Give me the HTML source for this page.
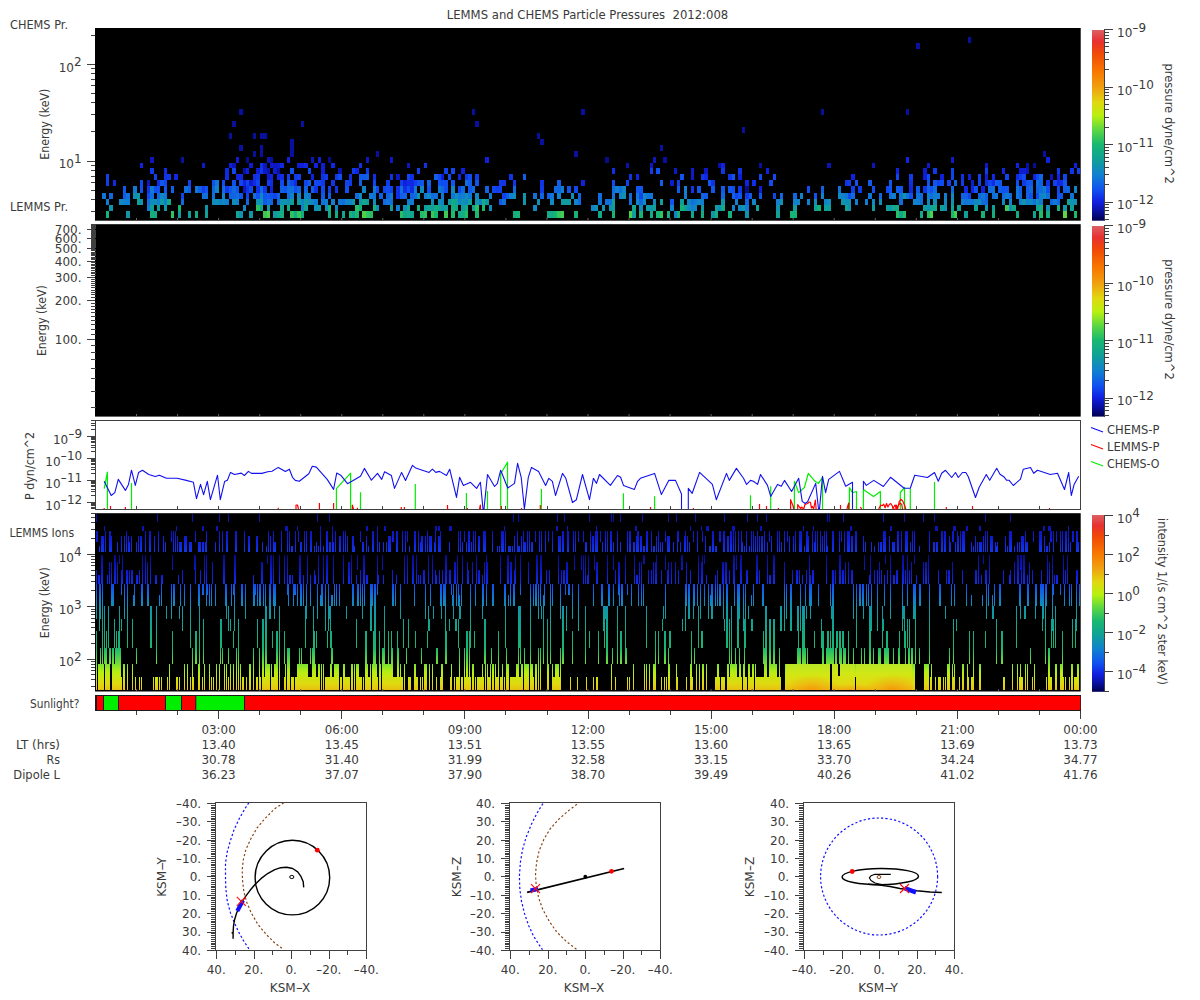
<!DOCTYPE html>
<html><head><meta charset="utf-8"><title>LEMMS and CHEMS Particle Pressures 2012:008</title>
<style>html,body{margin:0;padding:0;background:#fff}svg{display:block}text{font-family:'DejaVu Sans','Liberation Sans',sans-serif;fill:#3a3a3a}</style></head><body>
<svg width="1200" height="1000" viewBox="0 0 1200 1000">
<defs><linearGradient id="cb" x1="0" y1="1" x2="0" y2="0">
<stop offset="0.0" stop-color="#000050"/>
<stop offset="0.05" stop-color="#0810a0"/>
<stop offset="0.1" stop-color="#1020e0"/>
<stop offset="0.16" stop-color="#1050f0"/>
<stop offset="0.24" stop-color="#1080d0"/>
<stop offset="0.32" stop-color="#10a098"/>
<stop offset="0.4" stop-color="#18b870"/>
<stop offset="0.48" stop-color="#60d840"/>
<stop offset="0.55" stop-color="#b8f010"/>
<stop offset="0.62" stop-color="#e0d810"/>
<stop offset="0.7" stop-color="#f0a010"/>
<stop offset="0.78" stop-color="#f87800"/>
<stop offset="0.88" stop-color="#f04808"/>
<stop offset="0.94" stop-color="#e83030"/>
<stop offset="1.0" stop-color="#dc6064"/>
</linearGradient></defs>
<rect width="1200" height="1000" fill="#fff"/>
<text x="587.5" y="19" text-anchor="middle" font-size="12" textLength="281.5" lengthAdjust="spacingAndGlyphs" xml:space="preserve">LEMMS and CHEMS Particle Pressures  2012:008</text>
<rect x="95" y="28" width="985.7" height="192.7" fill="#000"/>
<text x="10" y="28.7" text-anchor="start" font-size="12" textLength="58" lengthAdjust="spacingAndGlyphs">CHEMS Pr.</text>
<text x="10" y="210.7" text-anchor="start" font-size="12" textLength="58" lengthAdjust="spacingAndGlyphs">LEMMS Pr.</text>
<text x="49" y="124.2" text-anchor="middle" font-size="12" transform="rotate(-90 49 124.2)" textLength="71" lengthAdjust="spacingAndGlyphs">Energy (keV)</text>
<path d="M87 64.3H95M87 161.0H95M91 35.2H95M91 68.7H95M91 73.7H95M91 79.3H95M91 85.8H95M91 93.4H95M91 102.8H95M91 114.9H95M91 131.9H95M91 165.4H95M91 170.4H95M91 176.0H95M91 182.5H95M91 190.1H95M91 199.5H95M91 211.6H95" stroke="#404040" stroke-width="1" fill="none" shape-rendering="crispEdges"/>
<text x="81.6" y="71.7" text-anchor="end" font-size="12">10<tspan dy="-5.5">2</tspan></text>
<text x="81.6" y="168.4" text-anchor="end" font-size="12">10<tspan dy="-5.5">1</tspan></text>
<path d="M102 193h4v6h-4zM386 199h4v6h-4zM899 193h4v6h-4z" fill="#1074d8" shape-rendering="crispEdges"/>
<path d="M106 211h3v7h-3zM328 205h3v6h-3zM516 211h4v7h-4zM554 211h3v7h-3zM612 211h3v7h-3zM790 211h3v7h-3z" fill="#17b477" shape-rendering="crispEdges"/>
<path d="M106 199h3v6h-3zM489 193h3v6h-3zM694 199h3v6h-3z" fill="#107bd4" shape-rendering="crispEdges"/>
<path d="M106 180h3v6h-3zM267 180h3v6h-3zM400 180h3v6h-3zM475 174h4v6h-4zM677 180h3v6h-3zM848 180h3v6h-3z" fill="#103dea" shape-rendering="crispEdges"/>
<path d="M106 174h3v6h-3zM246 180h3v6h-3zM297 174h4v6h-4zM390 186h3v7h-3zM444 168h4v6h-4zM502 193h4v6h-4zM626 180h3v6h-3zM851 186h4v7h-4zM988 180h4v6h-4zM1053 180h4v6h-4z" fill="#1041eb" shape-rendering="crispEdges"/>
<path d="M109 205h4v6h-4zM284 199h3v6h-3zM523 193h3v6h-3zM602 205h3v6h-3zM609 205h3v6h-3zM848 205h3v6h-3zM927 205h3v6h-3z" fill="#1094ad" shape-rendering="crispEdges"/>
<path d="M109 193h4v6h-4zM181 199h3v6h-3zM222 186h3v7h-3zM287 193h3v6h-3zM1009 193h3v6h-3z" fill="#1069df" shape-rendering="crispEdges"/>
<path d="M113 180h3v6h-3z" fill="#102ae3" shape-rendering="crispEdges"/>
<path d="M119 199h4v6h-4zM738 205h4v6h-4zM1043 193h3v6h-3z" fill="#1088c2" shape-rendering="crispEdges"/>
<path d="M123 199h3v6h-3zM684 186h3v7h-3zM776 199h4v6h-4zM793 199h4v6h-4z" fill="#1080cf" shape-rendering="crispEdges"/>
<path d="M123 193h3v6h-3zM468 180h4v6h-4zM704 193h4v6h-4zM868 180h4v6h-4zM998 186h4v7h-4z" fill="#105ce8" shape-rendering="crispEdges"/>
<path d="M123 186h3v7h-3zM160 180h4v6h-4zM267 193h3v6h-3zM697 186h4v7h-4zM749 193h3v6h-3zM1063 180h4v6h-4z" fill="#1059ea" shape-rendering="crispEdges"/>
<path d="M126 211h4v7h-4zM841 199h4v6h-4z" fill="#1097a7" shape-rendering="crispEdges"/>
<path d="M126 199h4v6h-4zM225 199h4v6h-4zM461 193h4v6h-4zM927 193h3v6h-3z" fill="#107cd3" shape-rendering="crispEdges"/>
<path d="M126 193h4v6h-4zM236 193h3v6h-3zM373 193h3v6h-3zM400 186h3v7h-3zM502 199h4v6h-4zM533 193h4v6h-4zM598 199h4v6h-4zM1070 193h4v6h-4z" fill="#1072d9" shape-rendering="crispEdges"/>
<path d="M133 193h4v6h-4zM827 199h4v6h-4zM978 199h3v6h-3z" fill="#108db9" shape-rendering="crispEdges"/>
<path d="M133 186h4v7h-4zM147 205h3v6h-3zM1016 193h3v6h-3zM1053 199h4v6h-4z" fill="#1078d5" shape-rendering="crispEdges"/>
<path d="M137 199h3v6h-3zM431 205h3v6h-3zM468 199h4v6h-4z" fill="#109f99" shape-rendering="crispEdges"/>
<path d="M137 193h3v6h-3zM715 205h3v6h-3z" fill="#109ba0" shape-rendering="crispEdges"/>
<path d="M140 199h3v6h-3zM461 199h4v6h-4zM595 205h3v6h-3z" fill="#1093af" shape-rendering="crispEdges"/>
<path d="M140 186h3v7h-3zM212 180h3v6h-3zM256 193h4v6h-4zM930 186h3v7h-3z" fill="#1051ef" shape-rendering="crispEdges"/>
<path d="M140 180h3v6h-3zM574 186h4v7h-4zM1036 193h3v6h-3z" fill="#1049ee" shape-rendering="crispEdges"/>
<path d="M140 163h3v5h-3zM243 180h3v6h-3zM277 174h3v6h-3zM314 163h4v5h-4zM636 174h3v6h-3zM896 168h3v6h-3zM1046 157h4v6h-4zM1057 174h3v6h-3z" fill="#1021e0" shape-rendering="crispEdges"/>
<path d="M147 199h3v6h-3zM383 199h3v6h-3zM619 186h3v7h-3zM951 186h3v7h-3z" fill="#106cde" shape-rendering="crispEdges"/>
<path d="M147 193h3v6h-3zM612 180h3v6h-3z" fill="#104bee" shape-rendering="crispEdges"/>
<path d="M147 186h3v7h-3zM424 163h3v5h-3z" fill="#1031e6" shape-rendering="crispEdges"/>
<path d="M147 180h3v6h-3zM366 157h3v6h-3zM407 163h3v5h-3z" fill="#0c17bd" shape-rendering="crispEdges"/>
<path d="M150 211h4v7h-4zM359 205h3v6h-3zM677 211h3v7h-3z" fill="#15b07e" shape-rendering="crispEdges"/>
<path d="M150 205h4v6h-4zM684 205h3v6h-3zM1070 205h4v6h-4z" fill="#10a196" shape-rendering="crispEdges"/>
<path d="M150 199h4v6h-4zM232 199h4v6h-4zM373 199h3v6h-3zM639 205h4v6h-4z" fill="#108cbb" shape-rendering="crispEdges"/>
<path d="M150 193h4v6h-4zM287 186h3v7h-3zM598 193h4v6h-4zM933 186h4v7h-4zM992 193h3v6h-3z" fill="#106ddd" shape-rendering="crispEdges"/>
<path d="M150 186h4v7h-4zM468 193h4v6h-4z" fill="#1079d4" shape-rendering="crispEdges"/>
<path d="M150 168h4v6h-4zM349 180h3v6h-3zM352 168h3v6h-3zM366 168h3v6h-3zM933 168h4v6h-4zM1022 180h4v6h-4z" fill="#103ae9" shape-rendering="crispEdges"/>
<path d="M150 157h4v6h-4zM243 186h3v7h-3zM1026 168h3v6h-3z" fill="#0b17bb" shape-rendering="crispEdges"/>
<path d="M154 211h3v7h-3zM195 211h3v7h-3zM455 205h3v6h-3zM721 205h4v6h-4zM920 211h3v7h-3z" fill="#13aa87" shape-rendering="crispEdges"/>
<path d="M154 199h3v6h-3zM325 205h3v6h-3zM376 205h3v6h-3zM403 205h4v6h-4zM718 205h3v6h-3z" fill="#108fb6" shape-rendering="crispEdges"/>
<path d="M154 186h3v7h-3zM294 186h3v7h-3zM444 186h4v7h-4zM468 174h4v6h-4zM732 186h3v7h-3zM807 186h3v7h-3z" fill="#104eef" shape-rendering="crispEdges"/>
<path d="M154 174h3v6h-3zM188 180h3v6h-3zM246 193h3v6h-3zM951 168h3v6h-3z" fill="#1042eb" shape-rendering="crispEdges"/>
<path d="M157 205h3v6h-3zM366 199h3v6h-3zM680 199h4v6h-4z" fill="#109e9c" shape-rendering="crispEdges"/>
<path d="M157 199h3v6h-3zM236 199h3v6h-3zM331 199h4v6h-4zM735 199h3v6h-3zM1019 199h3v6h-3z" fill="#1080d0" shape-rendering="crispEdges"/>
<path d="M157 193h3v6h-3zM246 199h3v6h-3zM554 186h3v7h-3zM578 199h3v6h-3zM793 193h4v6h-4z" fill="#1068e0" shape-rendering="crispEdges"/>
<path d="M157 186h3v7h-3zM270 193h3v6h-3zM290 168h4v6h-4zM338 174h4v6h-4zM345 186h4v7h-4zM927 174h3v6h-3zM1016 180h3v6h-3zM1029 193h4v6h-4zM1057 193h3v6h-3z" fill="#104ff0" shape-rendering="crispEdges"/>
<path d="M157 180h3v6h-3zM992 180h3v6h-3z" fill="#102de4" shape-rendering="crispEdges"/>
<path d="M160 199h4v6h-4zM424 205h3v6h-3zM561 199h3v6h-3z" fill="#109ba1" shape-rendering="crispEdges"/>
<path d="M160 193h4v6h-4zM215 186h4v7h-4zM311 199h3v6h-3zM619 193h3v6h-3zM797 199h3v6h-3z" fill="#1086c6" shape-rendering="crispEdges"/>
<path d="M164 205h3v6h-3zM448 199h3v6h-3zM889 205h3v6h-3z" fill="#109aa3" shape-rendering="crispEdges"/>
<path d="M164 199h3v6h-3zM410 199h4v6h-4zM561 186h3v7h-3zM933 193h4v6h-4zM968 199h3v6h-3zM1043 186h3v7h-3z" fill="#107dd2" shape-rendering="crispEdges"/>
<path d="M164 193h3v6h-3zM369 193h4v6h-4zM636 193h3v6h-3z" fill="#1078d6" shape-rendering="crispEdges"/>
<path d="M164 186h3v7h-3zM451 180h4v6h-4zM639 186h4v7h-4zM738 193h4v6h-4zM889 180h3v6h-3zM1029 180h4v6h-4z" fill="#1057eb" shape-rendering="crispEdges"/>
<path d="M164 180h3v6h-3zM438 174h3v6h-3zM451 168h4v6h-4zM773 193h3v6h-3zM1036 174h3v6h-3zM1057 186h3v7h-3z" fill="#1048ed" shape-rendering="crispEdges"/>
<path d="M164 174h3v6h-3zM314 186h4v7h-4zM321 174h4v6h-4zM390 174h3v6h-3zM721 168h4v6h-4zM845 180h3v6h-3z" fill="#1033e6" shape-rendering="crispEdges"/>
<path d="M164 168h3v6h-3zM253 180h3v6h-3zM270 180h3v6h-3zM407 180h3v6h-3zM410 186h4v7h-4zM985 180h3v6h-3zM1016 174h3v6h-3z" fill="#102be4" shape-rendering="crispEdges"/>
<path d="M167 199h4v6h-4zM328 211h3v7h-3zM407 211h3v7h-3zM458 211h3v7h-3zM547 211h3v7h-3z" fill="#14ab86" shape-rendering="crispEdges"/>
<path d="M167 174h4v6h-4zM225 186h4v7h-4zM260 168h3v6h-3zM499 180h3v6h-3zM701 174h3v6h-3z" fill="#1037e8" shape-rendering="crispEdges"/>
<path d="M171 211h3v7h-3z" fill="#2fc261" shape-rendering="crispEdges"/>
<path d="M171 186h3v7h-3zM927 186h3v7h-3zM1067 186h3v7h-3z" fill="#1063e3" shape-rendering="crispEdges"/>
<path d="M174 174h4v6h-4zM280 163h4v5h-4zM964 186h4v7h-4z" fill="#1028e3" shape-rendering="crispEdges"/>
<path d="M178 211h3v7h-3zM564 199h3v6h-3zM612 205h3v6h-3zM814 205h3v6h-3zM923 205h4v6h-4z" fill="#109d9d" shape-rendering="crispEdges"/>
<path d="M178 205h3v6h-3zM434 211h4v7h-4z" fill="#18b771" shape-rendering="crispEdges"/>
<path d="M181 193h3v6h-3zM239 180h4v6h-4zM407 174h3v6h-3zM492 186h4v7h-4zM1005 174h4v6h-4z" fill="#1046ed" shape-rendering="crispEdges"/>
<path d="M181 157h3v6h-3zM243 168h3v6h-3zM1026 163h3v5h-3z" fill="#0811a3" shape-rendering="crispEdges"/>
<path d="M184 186h4v7h-4z" fill="#106fdc" shape-rendering="crispEdges"/>
<path d="M188 211h3v7h-3zM290 199h4v6h-4zM872 205h3v6h-3zM940 205h4v6h-4z" fill="#109e9b" shape-rendering="crispEdges"/>
<path d="M188 186h3v7h-3zM677 186h3v7h-3zM721 186h4v7h-4z" fill="#105be9" shape-rendering="crispEdges"/>
<path d="M195 186h3v7h-3zM215 180h4v6h-4zM451 193h4v6h-4zM845 193h3v6h-3zM964 199h4v6h-4zM971 199h3v6h-3z" fill="#1077d6" shape-rendering="crispEdges"/>
<path d="M198 186h4v7h-4z" fill="#105de8" shape-rendering="crispEdges"/>
<path d="M202 193h3v6h-3zM434 193h4v6h-4z" fill="#1070da" shape-rendering="crispEdges"/>
<path d="M202 186h3v7h-3zM328 186h3v7h-3zM496 186h3v7h-3z" fill="#103fea" shape-rendering="crispEdges"/>
<path d="M202 163h3v5h-3zM270 163h3v5h-3zM691 174h3v6h-3z" fill="#0d1ac9" shape-rendering="crispEdges"/>
<path d="M205 211h3v7h-3zM845 205h3v6h-3zM957 205h4v6h-4zM992 205h3v6h-3z" fill="#10a197" shape-rendering="crispEdges"/>
<path d="M205 205h3v6h-3zM249 211h4v7h-4zM523 199h3v6h-3zM711 211h4v7h-4z" fill="#1096a9" shape-rendering="crispEdges"/>
<path d="M205 193h3v6h-3zM609 199h3v6h-3zM612 193h3v6h-3zM838 186h3v7h-3zM1036 180h3v6h-3z" fill="#1071da" shape-rendering="crispEdges"/>
<path d="M205 186h3v7h-3zM239 193h4v6h-4zM263 193h4v6h-4zM680 174h4v6h-4zM732 174h3v6h-3zM855 180h3v6h-3zM889 186h3v7h-3zM974 186h4v7h-4zM1026 180h3v6h-3z" fill="#1053ee" shape-rendering="crispEdges"/>
<path d="M212 199h3v6h-3zM550 199h4v6h-4zM872 199h3v6h-3z" fill="#108abf" shape-rendering="crispEdges"/>
<path d="M212 193h3v6h-3zM253 193h3v6h-3zM465 180h3v6h-3zM605 199h4v6h-4zM691 199h3v6h-3zM889 193h3v6h-3z" fill="#106fdb" shape-rendering="crispEdges"/>
<path d="M212 186h3v7h-3zM557 186h4v7h-4zM721 193h4v6h-4zM780 193h3v6h-3zM978 193h3v6h-3z" fill="#1066e1" shape-rendering="crispEdges"/>
<path d="M215 199h4v6h-4zM256 199h4v6h-4zM308 199h3v6h-3zM314 205h4v6h-4zM1036 199h3v6h-3zM1046 205h4v6h-4z" fill="#1090b4" shape-rendering="crispEdges"/>
<path d="M219 199h3v6h-3zM396 205h4v6h-4zM865 199h3v6h-3zM892 193h4v6h-4zM916 199h4v6h-4zM1026 199h3v6h-3z" fill="#107fd1" shape-rendering="crispEdges"/>
<path d="M222 199h3v6h-3zM451 186h4v7h-4zM489 205h3v6h-3zM643 199h3v6h-3zM653 199h3v6h-3zM944 199h3v6h-3zM951 193h3v6h-3z" fill="#108abe" shape-rendering="crispEdges"/>
<path d="M222 193h3v6h-3zM479 199h3v6h-3zM732 205h3v6h-3zM961 199h3v6h-3z" fill="#1082cd" shape-rendering="crispEdges"/>
<path d="M222 180h3v6h-3zM280 180h4v6h-4zM321 186h4v7h-4zM376 186h3v7h-3zM386 186h4v7h-4zM441 180h3v6h-3zM444 180h4v6h-4zM769 180h4v6h-4zM1022 174h4v6h-4z" fill="#104cef" shape-rendering="crispEdges"/>
<path d="M225 174h4v6h-4zM294 180h3v6h-3zM1060 180h3v6h-3z" fill="#102ce4" shape-rendering="crispEdges"/>
<path d="M225 168h4v6h-4zM304 163h4v5h-4zM704 174h4v6h-4zM992 174h3v6h-3zM1057 180h3v6h-3z" fill="#1029e3" shape-rendering="crispEdges"/>
<path d="M229 193h3v6h-3zM297 186h4v7h-4zM379 193h4v6h-4zM386 193h4v6h-4zM427 180h4v6h-4zM732 193h3v6h-3zM745 199h4v6h-4zM985 193h3v6h-3zM1036 186h3v7h-3z" fill="#1062e4" shape-rendering="crispEdges"/>
<path d="M229 186h3v7h-3zM420 180h4v6h-4zM567 186h4v7h-4zM1005 186h4v7h-4z" fill="#1056ec" shape-rendering="crispEdges"/>
<path d="M229 163h3v5h-3zM301 163h3v5h-3z" fill="#101fdd" shape-rendering="crispEdges"/>
<path d="M232 193h4v6h-4zM270 199h3v6h-3zM403 193h4v6h-4zM540 193h4v6h-4zM821 186h3v7h-3z" fill="#1064e3" shape-rendering="crispEdges"/>
<path d="M232 186h4v7h-4zM260 186h3v7h-3zM431 193h3v6h-3zM513 186h3v7h-3zM1002 193h3v6h-3z" fill="#106adf" shape-rendering="crispEdges"/>
<path d="M232 180h4v6h-4zM427 186h4v7h-4zM1002 186h3v7h-3zM1046 186h4v7h-4z" fill="#1050f0" shape-rendering="crispEdges"/>
<path d="M232 168h4v6h-4zM256 180h4v6h-4zM458 186h3v7h-3zM639 193h4v6h-4zM978 180h3v6h-3zM1063 174h4v6h-4z" fill="#1045ec" shape-rendering="crispEdges"/>
<path d="M232 163h4v5h-4z" fill="#0b15b6" shape-rendering="crispEdges"/>
<path d="M236 211h3v7h-3zM280 205h4v6h-4zM427 205h4v6h-4zM691 211h3v7h-3z" fill="#12a590" shape-rendering="crispEdges"/>
<path d="M236 186h3v7h-3zM475 180h4v6h-4zM670 199h4v6h-4zM759 193h3v6h-3zM909 193h4v6h-4zM933 180h4v6h-4z" fill="#1054ed" shape-rendering="crispEdges"/>
<path d="M236 174h3v6h-3zM270 174h3v6h-3zM458 174h3v6h-3zM745 180h4v6h-4z" fill="#1023e1" shape-rendering="crispEdges"/>
<path d="M236 157h3v6h-3z" fill="#0e1bcc" shape-rendering="crispEdges"/>
<path d="M239 211h4v7h-4zM537 199h3v6h-3zM622 193h4v6h-4zM780 199h3v6h-3zM848 199h3v6h-3z" fill="#1091b2" shape-rendering="crispEdges"/>
<path d="M239 174h4v6h-4zM331 163h4v5h-4zM410 180h4v6h-4zM909 186h4v7h-4z" fill="#1027e2" shape-rendering="crispEdges"/>
<path d="M243 205h3v6h-3zM694 205h3v6h-3z" fill="#1086c5" shape-rendering="crispEdges"/>
<path d="M246 186h3v7h-3zM373 174h3v6h-3zM711 180h4v6h-4zM961 174h3v6h-3z" fill="#1030e5" shape-rendering="crispEdges"/>
<path d="M246 168h3v6h-3z" fill="#0f1ed9" shape-rendering="crispEdges"/>
<path d="M246 157h3v6h-3z" fill="#060c8c" shape-rendering="crispEdges"/>
<path d="M249 186h4v7h-4zM314 180h4v6h-4zM759 174h3v6h-3zM773 174h3v6h-3zM848 193h3v6h-3zM886 186h3v7h-3z" fill="#104aee" shape-rendering="crispEdges"/>
<path d="M249 180h4v6h-4zM670 180h4v6h-4z" fill="#0d1bcb" shape-rendering="crispEdges"/>
<path d="M249 163h4v5h-4zM923 168h4v6h-4z" fill="#0e1ccf" shape-rendering="crispEdges"/>
<path d="M253 174h3v6h-3zM256 186h4v7h-4zM349 174h3v6h-3zM396 193h4v6h-4zM396 186h4v7h-4zM738 168h4v6h-4zM909 180h4v6h-4z" fill="#102fe5" shape-rendering="crispEdges"/>
<path d="M256 205h4v6h-4z" fill="#29c065" shape-rendering="crispEdges"/>
<path d="M256 174h4v6h-4zM331 180h4v6h-4zM513 180h3v6h-3zM923 186h4v7h-4z" fill="#1036e7" shape-rendering="crispEdges"/>
<path d="M256 168h4v6h-4z" fill="#0e1cd2" shape-rendering="crispEdges"/>
<path d="M260 205h3v6h-3zM352 211h3v7h-3z" fill="#12a68d" shape-rendering="crispEdges"/>
<path d="M260 199h3v6h-3z" fill="#1095ac" shape-rendering="crispEdges"/>
<path d="M260 193h3v6h-3zM1009 199h3v6h-3z" fill="#1085c8" shape-rendering="crispEdges"/>
<path d="M260 163h3v5h-3zM359 163h3v5h-3zM1046 180h4v6h-4z" fill="#1032e6" shape-rendering="crispEdges"/>
<path d="M263 211h4v7h-4z" fill="#39c75a" shape-rendering="crispEdges"/>
<path d="M263 199h4v6h-4zM359 174h3v6h-3zM362 174h4v6h-4zM499 199h3v6h-3zM708 180h3v6h-3zM916 186h4v7h-4z" fill="#105ae9" shape-rendering="crispEdges"/>
<path d="M263 186h4v7h-4zM502 180h4v6h-4zM540 180h4v6h-4zM629 174h3v6h-3zM728 174h4v6h-4z" fill="#1035e7" shape-rendering="crispEdges"/>
<path d="M263 168h4v6h-4zM390 157h3v6h-3zM985 163h3v5h-3z" fill="#0d19c5" shape-rendering="crispEdges"/>
<path d="M263 163h4v5h-4zM273 163h4v5h-4z" fill="#0c18be" shape-rendering="crispEdges"/>
<path d="M267 211h3v7h-3z" fill="#55d347" shape-rendering="crispEdges"/>
<path d="M267 205h3v6h-3zM475 199h4v6h-4zM485 199h4v6h-4z" fill="#1097a8" shape-rendering="crispEdges"/>
<path d="M267 199h3v6h-3z" fill="#106ddc" shape-rendering="crispEdges"/>
<path d="M267 174h3v6h-3z" fill="#0e1cd1" shape-rendering="crispEdges"/>
<path d="M267 168h3v6h-3z" fill="#0a13ac" shape-rendering="crispEdges"/>
<path d="M267 157h3v6h-3zM827 163h4v5h-4z" fill="#0a14b0" shape-rendering="crispEdges"/>
<path d="M270 186h3v7h-3zM766 168h3v6h-3zM1074 163h3v5h-3z" fill="#0f1fdb" shape-rendering="crispEdges"/>
<path d="M270 157h3v6h-3z" fill="#070e98" shape-rendering="crispEdges"/>
<path d="M273 211h4v7h-4z" fill="#1098a7" shape-rendering="crispEdges"/>
<path d="M273 193h4v6h-4zM304 180h4v6h-4z" fill="#1044ec" shape-rendering="crispEdges"/>
<path d="M273 168h4v6h-4zM691 168h3v6h-3z" fill="#0e1cce" shape-rendering="crispEdges"/>
<path d="M277 211h3v7h-3zM403 211h4v7h-4z" fill="#12a68e" shape-rendering="crispEdges"/>
<path d="M277 199h3v6h-3zM342 199h3v6h-3zM920 199h3v6h-3zM930 193h3v6h-3zM992 186h3v7h-3z" fill="#106edc" shape-rendering="crispEdges"/>
<path d="M277 193h3v6h-3zM359 180h3v6h-3zM400 193h3v6h-3zM660 180h3v6h-3z" fill="#1061e5" shape-rendering="crispEdges"/>
<path d="M277 168h3v6h-3z" fill="#0811a2" shape-rendering="crispEdges"/>
<path d="M277 163h3v5h-3z" fill="#0d1ac8" shape-rendering="crispEdges"/>
<path d="M280 211h4v7h-4zM451 205h4v6h-4z" fill="#15af7f" shape-rendering="crispEdges"/>
<path d="M280 199h4v6h-4z" fill="#1093ae" shape-rendering="crispEdges"/>
<path d="M280 186h4v7h-4zM308 180h3v6h-3zM311 186h3v7h-3zM366 174h3v6h-3zM896 186h3v7h-3zM964 193h4v6h-4z" fill="#105fe6" shape-rendering="crispEdges"/>
<path d="M280 174h4v6h-4zM403 186h4v7h-4zM410 174h4v6h-4zM612 168h3v6h-3zM752 180h4v6h-4z" fill="#102ee5" shape-rendering="crispEdges"/>
<path d="M284 186h3v7h-3zM636 186h3v7h-3zM927 180h3v6h-3zM998 180h4v6h-4z" fill="#1055ed" shape-rendering="crispEdges"/>
<path d="M287 205h3v6h-3zM301 211h3v7h-3z" fill="#14ac84" shape-rendering="crispEdges"/>
<path d="M287 199h3v6h-3zM431 199h3v6h-3zM465 193h3v6h-3zM933 199h4v6h-4z" fill="#108eb7" shape-rendering="crispEdges"/>
<path d="M287 180h3v6h-3zM328 193h3v6h-3zM1039 180h4v6h-4z" fill="#1060e6" shape-rendering="crispEdges"/>
<path d="M287 174h3v6h-3zM414 180h3v6h-3zM499 186h3v7h-3zM1077 168h3v6h-3z" fill="#1040eb" shape-rendering="crispEdges"/>
<path d="M287 157h3v6h-3zM721 163h4v5h-4z" fill="#1020df" shape-rendering="crispEdges"/>
<path d="M290 211h4v7h-4z" fill="#2cc163" shape-rendering="crispEdges"/>
<path d="M290 193h4v6h-4zM345 199h4v6h-4zM362 186h4v7h-4zM458 199h3v6h-3zM591 205h4v6h-4zM674 211h3v7h-3zM1074 186h3v7h-3z" fill="#1084c9" shape-rendering="crispEdges"/>
<path d="M290 186h4v7h-4zM390 199h3v6h-3zM472 186h3v7h-3zM629 199h3v6h-3zM1046 193h4v6h-4z" fill="#1070db" shape-rendering="crispEdges"/>
<path d="M290 180h4v6h-4zM318 180h3v6h-3zM373 180h3v6h-3zM383 186h3v7h-3zM896 174h3v6h-3zM951 174h3v6h-3zM968 193h3v6h-3z" fill="#1047ed" shape-rendering="crispEdges"/>
<path d="M294 211h3v7h-3zM451 199h4v6h-4zM650 211h3v7h-3z" fill="#13aa88" shape-rendering="crispEdges"/>
<path d="M294 174h3v6h-3zM386 180h4v6h-4zM858 186h4v7h-4zM961 180h3v6h-3z" fill="#103be9" shape-rendering="crispEdges"/>
<path d="M297 211h4v7h-4z" fill="#35c55d" shape-rendering="crispEdges"/>
<path d="M297 199h4v6h-4z" fill="#109c9e" shape-rendering="crispEdges"/>
<path d="M297 193h4v6h-4zM533 205h4v6h-4zM927 199h3v6h-3z" fill="#1089c1" shape-rendering="crispEdges"/>
<path d="M297 163h4v5h-4zM971 180h3v6h-3zM1019 168h3v6h-3z" fill="#0e1dd2" shape-rendering="crispEdges"/>
<path d="M301 205h3v6h-3zM301 199h3v6h-3zM800 193h3v6h-3z" fill="#1084c8" shape-rendering="crispEdges"/>
<path d="M304 205h4v6h-4z" fill="#11a491" shape-rendering="crispEdges"/>
<path d="M304 199h4v6h-4z" fill="#1099a3" shape-rendering="crispEdges"/>
<path d="M304 193h4v6h-4z" fill="#1081cd" shape-rendering="crispEdges"/>
<path d="M304 186h4v7h-4zM701 193h3v6h-3zM879 193h3v6h-3zM985 199h3v6h-3zM1019 193h3v6h-3zM1050 199h3v6h-3z" fill="#1065e2" shape-rendering="crispEdges"/>
<path d="M308 193h3v6h-3zM407 199h3v6h-3zM424 193h3v6h-3zM1005 193h4v6h-4z" fill="#107bd3" shape-rendering="crispEdges"/>
<path d="M308 168h3v6h-3zM407 186h3v7h-3zM448 174h3v6h-3zM940 180h4v6h-4z" fill="#104def" shape-rendering="crispEdges"/>
<path d="M311 174h3v6h-3zM851 174h4v6h-4zM981 186h4v7h-4zM1016 163h3v5h-3zM1033 174h3v6h-3z" fill="#1022e1" shape-rendering="crispEdges"/>
<path d="M311 157h3v6h-3zM872 163h3v5h-3z" fill="#0b16ba" shape-rendering="crispEdges"/>
<path d="M314 199h4v6h-4zM390 193h3v6h-3zM414 186h3v7h-3zM745 205h4v6h-4z" fill="#107ad4" shape-rendering="crispEdges"/>
<path d="M318 205h3v6h-3zM646 205h4v6h-4z" fill="#1099a4" shape-rendering="crispEdges"/>
<path d="M318 157h3v6h-3zM321 168h4v6h-4zM738 174h4v6h-4z" fill="#0f1ed7" shape-rendering="crispEdges"/>
<path d="M321 199h4v6h-4zM906 193h3v6h-3zM916 193h4v6h-4zM1016 186h3v7h-3z" fill="#1073d9" shape-rendering="crispEdges"/>
<path d="M321 193h4v6h-4zM1026 186h3v7h-3z" fill="#105aea" shape-rendering="crispEdges"/>
<path d="M321 180h4v6h-4zM738 186h4v7h-4z" fill="#1038e8" shape-rendering="crispEdges"/>
<path d="M321 163h4v5h-4z" fill="#0f1dd4" shape-rendering="crispEdges"/>
<path d="M325 199h3v6h-3z" fill="#107fd0" shape-rendering="crispEdges"/>
<path d="M325 174h3v6h-3zM909 174h4v6h-4zM985 168h3v6h-3zM1019 174h3v6h-3z" fill="#103ce9" shape-rendering="crispEdges"/>
<path d="M328 157h3v6h-3zM605 157h4v6h-4z" fill="#060b88" shape-rendering="crispEdges"/>
<path d="M335 211h3v7h-3zM513 211h3v7h-3zM701 211h3v7h-3zM1016 211h3v7h-3z" fill="#14ad83" shape-rendering="crispEdges"/>
<path d="M335 205h3v6h-3zM420 186h4v7h-4zM475 193h4v6h-4zM838 193h3v6h-3zM974 199h4v6h-4z" fill="#1089c0" shape-rendering="crispEdges"/>
<path d="M335 186h3v7h-3zM509 174h4v6h-4zM691 186h3v7h-3zM1057 168h3v6h-3zM1070 168h4v6h-4z" fill="#1034e7" shape-rendering="crispEdges"/>
<path d="M335 174h3v6h-3zM465 174h3v6h-3zM540 186h4v7h-4zM745 193h4v6h-4z" fill="#1039e8" shape-rendering="crispEdges"/>
<path d="M338 199h4v6h-4zM550 193h4v6h-4zM1033 199h3v6h-3z" fill="#1075d7" shape-rendering="crispEdges"/>
<path d="M338 168h4v6h-4z" fill="#0a13ad" shape-rendering="crispEdges"/>
<path d="M342 211h3v7h-3z" fill="#12a78d" shape-rendering="crispEdges"/>
<path d="M345 180h4v6h-4zM735 193h3v6h-3zM937 180h3v6h-3zM947 180h4v6h-4zM978 174h3v6h-3z" fill="#1043ec" shape-rendering="crispEdges"/>
<path d="M349 211h3v7h-3z" fill="#16b27b" shape-rendering="crispEdges"/>
<path d="M349 199h3v6h-3zM643 193h3v6h-3z" fill="#1088c1" shape-rendering="crispEdges"/>
<path d="M352 199h3v6h-3zM417 193h3v6h-3zM441 205h3v6h-3zM650 205h3v6h-3zM742 205h3v6h-3zM985 205h3v6h-3zM1022 199h4v6h-4z" fill="#1095ab" shape-rendering="crispEdges"/>
<path d="M355 211h4v7h-4z" fill="#18b772" shape-rendering="crispEdges"/>
<path d="M355 205h4v6h-4zM896 211h3v7h-3z" fill="#28bf65" shape-rendering="crispEdges"/>
<path d="M355 193h4v6h-4zM414 193h3v6h-3zM629 193h3v6h-3zM851 193h4v6h-4zM899 199h4v6h-4zM981 199h4v6h-4z" fill="#106cdd" shape-rendering="crispEdges"/>
<path d="M355 168h4v6h-4zM971 186h3v7h-3z" fill="#1025e2" shape-rendering="crispEdges"/>
<path d="M359 199h3v6h-3zM721 199h4v6h-4zM903 193h3v6h-3z" fill="#1096aa" shape-rendering="crispEdges"/>
<path d="M359 193h3v6h-3zM845 199h3v6h-3z" fill="#108bbd" shape-rendering="crispEdges"/>
<path d="M362 211h4v7h-4z" fill="#50d14a" shape-rendering="crispEdges"/>
<path d="M362 199h4v6h-4zM632 205h4v6h-4zM933 205h4v6h-4z" fill="#13a88b" shape-rendering="crispEdges"/>
<path d="M366 211h3v7h-3z" fill="#32c45f" shape-rendering="crispEdges"/>
<path d="M369 211h4v7h-4z" fill="#25be67" shape-rendering="crispEdges"/>
<path d="M373 205h3v6h-3zM1039 205h4v6h-4z" fill="#15b07d" shape-rendering="crispEdges"/>
<path d="M373 186h3v7h-3zM458 193h3v6h-3zM646 193h4v6h-4zM868 193h4v6h-4z" fill="#1076d7" shape-rendering="crispEdges"/>
<path d="M390 205h3v6h-3zM567 199h4v6h-4z" fill="#109c9f" shape-rendering="crispEdges"/>
<path d="M396 174h4v6h-4z" fill="#0b17bc" shape-rendering="crispEdges"/>
<path d="M400 211h3v7h-3z" fill="#27bf66" shape-rendering="crispEdges"/>
<path d="M403 180h4v6h-4z" fill="#0f1fda" shape-rendering="crispEdges"/>
<path d="M407 205h3v6h-3zM410 211h4v7h-4zM951 205h3v6h-3z" fill="#11a394" shape-rendering="crispEdges"/>
<path d="M410 193h4v6h-4zM434 174h4v6h-4zM954 180h3v6h-3zM1063 186h4v7h-4z" fill="#1060e5" shape-rendering="crispEdges"/>
<path d="M417 205h3v6h-3zM680 205h4v6h-4zM793 211h4v7h-4z" fill="#16b378" shape-rendering="crispEdges"/>
<path d="M417 180h3v6h-3z" fill="#1051f0" shape-rendering="crispEdges"/>
<path d="M417 168h3v6h-3zM650 168h3v6h-3z" fill="#103eea" shape-rendering="crispEdges"/>
<path d="M420 211h4v7h-4zM903 211h3v7h-3zM927 211h3v7h-3z" fill="#23bd69" shape-rendering="crispEdges"/>
<path d="M424 211h3v7h-3z" fill="#2ec261" shape-rendering="crispEdges"/>
<path d="M427 193h4v6h-4zM697 199h4v6h-4z" fill="#1087c4" shape-rendering="crispEdges"/>
<path d="M431 211h3v7h-3z" fill="#3ac759" shape-rendering="crispEdges"/>
<path d="M434 205h4v6h-4z" fill="#14ad82" shape-rendering="crispEdges"/>
<path d="M438 205h3v6h-3zM455 199h3v6h-3zM472 205h3v6h-3zM756 205h3v6h-3zM930 205h3v6h-3z" fill="#11a393" shape-rendering="crispEdges"/>
<path d="M438 199h3v6h-3zM455 193h3v6h-3zM571 193h3v6h-3z" fill="#108fb5" shape-rendering="crispEdges"/>
<path d="M438 186h3v7h-3zM441 193h3v6h-3zM995 193h3v6h-3zM1039 199h4v6h-4z" fill="#1079d5" shape-rendering="crispEdges"/>
<path d="M438 180h3v6h-3zM656 168h4v6h-4zM814 193h3v6h-3z" fill="#1052ef" shape-rendering="crispEdges"/>
<path d="M441 199h3v6h-3zM574 199h4v6h-4z" fill="#1084ca" shape-rendering="crispEdges"/>
<path d="M441 186h3v7h-3zM461 186h4v7h-4zM612 186h3v7h-3zM920 193h3v6h-3zM988 186h4v7h-4zM1039 186h4v7h-4z" fill="#106bde" shape-rendering="crispEdges"/>
<path d="M441 174h3v6h-3z" fill="#0e1dd3" shape-rendering="crispEdges"/>
<path d="M444 211h4v7h-4z" fill="#40ca55" shape-rendering="crispEdges"/>
<path d="M444 205h4v6h-4zM824 205h3v6h-3zM964 211h4v7h-4z" fill="#10a097" shape-rendering="crispEdges"/>
<path d="M451 211h4v7h-4zM1039 211h4v7h-4z" fill="#21bc6a" shape-rendering="crispEdges"/>
<path d="M461 211h4v7h-4zM728 211h4v7h-4zM992 211h3v7h-3z" fill="#15ae80" shape-rendering="crispEdges"/>
<path d="M461 205h4v6h-4zM793 205h4v6h-4zM886 205h3v6h-3z" fill="#109f9a" shape-rendering="crispEdges"/>
<path d="M461 168h4v6h-4zM923 174h4v6h-4z" fill="#0f1eda" shape-rendering="crispEdges"/>
<path d="M465 211h3v7h-3z" fill="#23bd68" shape-rendering="crispEdges"/>
<path d="M465 205h3v6h-3zM550 211h4v7h-4z" fill="#14ab85" shape-rendering="crispEdges"/>
<path d="M465 199h3v6h-3zM1002 199h3v6h-3z" fill="#1088c3" shape-rendering="crispEdges"/>
<path d="M468 186h4v7h-4z" fill="#1055ec" shape-rendering="crispEdges"/>
<path d="M475 211h4v7h-4z" fill="#1ab96f" shape-rendering="crispEdges"/>
<path d="M475 205h4v6h-4z" fill="#2cc162" shape-rendering="crispEdges"/>
<path d="M482 205h3v6h-3z" fill="#1ab96e" shape-rendering="crispEdges"/>
<path d="M482 199h3v6h-3z" fill="#15ae81" shape-rendering="crispEdges"/>
<path d="M485 186h4v7h-4zM578 193h3v6h-3z" fill="#1063e4" shape-rendering="crispEdges"/>
<path d="M485 157h4v6h-4z" fill="#1020de" shape-rendering="crispEdges"/>
<path d="M506 193h3v6h-3z" fill="#1058ea" shape-rendering="crispEdges"/>
<path d="M509 193h4v6h-4zM615 186h4v7h-4zM807 199h3v6h-3zM1039 193h4v6h-4z" fill="#1081ce" shape-rendering="crispEdges"/>
<path d="M513 193h3v6h-3zM687 205h4v6h-4z" fill="#108cba" shape-rendering="crispEdges"/>
<path d="M523 174h3v6h-3zM557 180h4v6h-4z" fill="#105de7" shape-rendering="crispEdges"/>
<path d="M547 193h3v6h-3z" fill="#105ee7" shape-rendering="crispEdges"/>
<path d="M557 211h4v7h-4z" fill="#37c65b" shape-rendering="crispEdges"/>
<path d="M557 193h4v6h-4zM821 193h3v6h-3zM913 199h3v6h-3z" fill="#1083cb" shape-rendering="crispEdges"/>
<path d="M561 211h3v7h-3z" fill="#46cc51" shape-rendering="crispEdges"/>
<path d="M574 211h4v7h-4zM639 211h4v7h-4zM981 211h4v7h-4zM1057 205h3v6h-3z" fill="#16b27a" shape-rendering="crispEdges"/>
<path d="M581 180h4v6h-4z" fill="#1020e0" shape-rendering="crispEdges"/>
<path d="M598 211h4v7h-4z" fill="#13a988" shape-rendering="crispEdges"/>
<path d="M612 199h3v6h-3zM1033 211h3v7h-3zM1067 199h3v6h-3z" fill="#11a294" shape-rendering="crispEdges"/>
<path d="M622 186h4v7h-4zM636 199h3v6h-3zM687 199h4v6h-4z" fill="#1087c3" shape-rendering="crispEdges"/>
<path d="M626 163h3v5h-3z" fill="#0913ab" shape-rendering="crispEdges"/>
<path d="M629 211h3v7h-3zM954 211h3v7h-3z" fill="#49ce4f" shape-rendering="crispEdges"/>
<path d="M632 211h4v7h-4zM827 205h4v6h-4z" fill="#109d9e" shape-rendering="crispEdges"/>
<path d="M639 199h4v6h-4zM1057 199h3v6h-3z" fill="#1066e2" shape-rendering="crispEdges"/>
<path d="M650 193h3v6h-3z" fill="#1073d8" shape-rendering="crispEdges"/>
<path d="M650 163h3v5h-3z" fill="#0c18c2" shape-rendering="crispEdges"/>
<path d="M653 205h3v6h-3zM974 205h4v6h-4z" fill="#11a392" shape-rendering="crispEdges"/>
<path d="M653 157h3v6h-3z" fill="#0c17be" shape-rendering="crispEdges"/>
<path d="M656 211h4v7h-4z" fill="#17b674" shape-rendering="crispEdges"/>
<path d="M660 211h3v7h-3z" fill="#31c35f" shape-rendering="crispEdges"/>
<path d="M660 199h3v6h-3z" fill="#10a098" shape-rendering="crispEdges"/>
<path d="M663 157h4v6h-4zM759 163h3v5h-3zM916 43h4v6h-4zM968 37h3v6h-3zM821 109h3v6h-3zM906 109h3v6h-3zM742 127h3v6h-3zM660 145h3v6h-3zM1043 151h3v6h-3zM239 109h4v6h-4zM232 121h4v6h-4zM229 133h3v6h-3zM253 133h3v6h-3zM260 133h3v6h-3zM263 133h4v6h-4zM301 121h3v6h-3zM290 139h4v6h-4zM290 145h4v6h-4zM290 151h4v6h-4zM239 145h4v6h-4zM260 145h3v6h-3zM260 151h3v6h-3zM253 151h3v6h-3zM376 151h3v6h-3zM472 109h3v6h-3zM475 121h4v6h-4zM581 109h4v6h-4zM537 133h3v6h-3zM540 139h4v6h-4zM574 151h4v6h-4z" fill="#0810a0" shape-rendering="crispEdges"/>
<path d="M667 211h3v7h-3zM1046 211h4v7h-4z" fill="#15af80" shape-rendering="crispEdges"/>
<path d="M670 205h4v6h-4z" fill="#1083ca" shape-rendering="crispEdges"/>
<path d="M674 168h3v6h-3zM704 168h4v6h-4z" fill="#0c19c3" shape-rendering="crispEdges"/>
<path d="M684 193h3v6h-3zM701 199h3v6h-3zM855 199h3v6h-3zM944 193h3v6h-3z" fill="#107ed1" shape-rendering="crispEdges"/>
<path d="M691 205h3v6h-3zM824 199h3v6h-3z" fill="#1081cf" shape-rendering="crispEdges"/>
<path d="M701 205h3v6h-3z" fill="#1098a5" shape-rendering="crispEdges"/>
<path d="M711 186h4v7h-4z" fill="#1058eb" shape-rendering="crispEdges"/>
<path d="M715 211h3v7h-3zM817 205h4v6h-4z" fill="#16b17b" shape-rendering="crispEdges"/>
<path d="M718 163h3v5h-3z" fill="#0911a5" shape-rendering="crispEdges"/>
<path d="M728 186h4v7h-4zM899 186h4v7h-4zM1060 193h3v6h-3z" fill="#1057ec" shape-rendering="crispEdges"/>
<path d="M745 211h4v7h-4z" fill="#1092b0" shape-rendering="crispEdges"/>
<path d="M745 186h4v7h-4z" fill="#060c8d" shape-rendering="crispEdges"/>
<path d="M752 199h4v6h-4z" fill="#1085c7" shape-rendering="crispEdges"/>
<path d="M759 186h3v7h-3z" fill="#101fde" shape-rendering="crispEdges"/>
<path d="M776 211h4v7h-4zM1036 205h3v6h-3z" fill="#11a295" shape-rendering="crispEdges"/>
<path d="M776 205h4v6h-4zM944 205h3v6h-3zM1070 199h4v6h-4z" fill="#1092b1" shape-rendering="crispEdges"/>
<path d="M814 199h3v6h-3zM879 199h3v6h-3z" fill="#108db8" shape-rendering="crispEdges"/>
<path d="M841 193h4v6h-4z" fill="#1082cc" shape-rendering="crispEdges"/>
<path d="M872 186h3v7h-3z" fill="#1052ee" shape-rendering="crispEdges"/>
<path d="M892 205h4v6h-4zM1012 205h4v6h-4z" fill="#13a88a" shape-rendering="crispEdges"/>
<path d="M896 205h3v6h-3z" fill="#14ac83" shape-rendering="crispEdges"/>
<path d="M899 211h4v7h-4z" fill="#12a78c" shape-rendering="crispEdges"/>
<path d="M906 157h3v6h-3z" fill="#1026e2" shape-rendering="crispEdges"/>
<path d="M927 163h3v5h-3z" fill="#0d1ac7" shape-rendering="crispEdges"/>
<path d="M930 211h3v7h-3z" fill="#50d14b" shape-rendering="crispEdges"/>
<path d="M937 193h3v6h-3z" fill="#107ed2" shape-rendering="crispEdges"/>
<path d="M940 174h4v6h-4z" fill="#0f1fdc" shape-rendering="crispEdges"/>
<path d="M951 211h3v7h-3z" fill="#18b870" shape-rendering="crispEdges"/>
<path d="M951 199h3v6h-3z" fill="#1093b0" shape-rendering="crispEdges"/>
<path d="M951 157h3v6h-3z" fill="#0d1bca" shape-rendering="crispEdges"/>
<path d="M961 193h3v6h-3zM1026 193h3v6h-3z" fill="#1061e4" shape-rendering="crispEdges"/>
<path d="M968 174h3v6h-3z" fill="#0f1dd5" shape-rendering="crispEdges"/>
<path d="M981 193h4v6h-4z" fill="#1076d6" shape-rendering="crispEdges"/>
<path d="M985 174h3v6h-3zM1022 168h4v6h-4z" fill="#0f1dd6" shape-rendering="crispEdges"/>
<path d="M995 180h3v6h-3z" fill="#105ee6" shape-rendering="crispEdges"/>
<path d="M1002 168h3v6h-3z" fill="#1024e1" shape-rendering="crispEdges"/>
<path d="M1005 205h4v6h-4z" fill="#42cb54" shape-rendering="crispEdges"/>
<path d="M1009 205h3v6h-3z" fill="#1090b3" shape-rendering="crispEdges"/>
<path d="M1019 186h3v7h-3z" fill="#105be8" shape-rendering="crispEdges"/>
<path d="M1029 199h4v6h-4z" fill="#1087c5" shape-rendering="crispEdges"/>
<path d="M1029 186h4v7h-4z" fill="#1067e0" shape-rendering="crispEdges"/>
<path d="M1033 163h3v5h-3z" fill="#060d8f" shape-rendering="crispEdges"/>
<path d="M1039 174h4v6h-4z" fill="#1067e1" shape-rendering="crispEdges"/>
<path d="M1050 174h3v6h-3z" fill="#0a15b4" shape-rendering="crispEdges"/>
<path d="M1063 211h4v7h-4z" fill="#5dd742" shape-rendering="crispEdges"/>
<path d="M1063 205h4v6h-4z" fill="#1098a6" shape-rendering="crispEdges"/>
<path d="M1074 211h3v7h-3z" fill="#1dba6d" shape-rendering="crispEdges"/>
<path d="M1074 199h3v6h-3z" fill="#108fb7" shape-rendering="crispEdges"/>
<path d="M136.5 220v-2M177.6 220v-2M218.6 220v-2M259.7 220v-2M300.7 220v-2M341.8 220v-2M382.8 220v-2M423.8 220v-2M464.9 220v-2M505.9 220v-2M547.0 220v-2M588.0 220v-2M629.0 220v-2M670.1 220v-2M711.1 220v-2M752.2 220v-2M793.2 220v-2M834.2 220v-2M875.3 220v-2M916.3 220v-2M957.4 220v-2M998.4 220v-2M1039.5 220v-2" stroke="#666" stroke-width="1" fill="none"/>
<rect x="1092" y="30" width="12" height="190.7" fill="url(#cb)"/>
<path d="M1104.5 30V220.7M1104 29.6H1112.5M1104 87.1H1112.5M1104 144.5H1112.5M1104 202.0H1112.5M1104 69.8H1108.5M1104 59.6H1108.5M1104 52.5H1108.5M1104 46.9H1108.5M1104 42.3H1108.5M1104 38.5H1108.5M1104 35.2H1108.5M1104 32.2H1108.5M1104 127.2H1108.5M1104 117.1H1108.5M1104 109.9H1108.5M1104 104.3H1108.5M1104 99.8H1108.5M1104 95.9H1108.5M1104 92.6H1108.5M1104 89.7H1108.5M1104 184.7H1108.5M1104 174.5H1108.5M1104 167.4H1108.5M1104 161.8H1108.5M1104 157.2H1108.5M1104 153.4H1108.5M1104 150.1H1108.5M1104 147.1H1108.5M1104 219.2H1108.5M1104 214.7H1108.5M1104 210.8H1108.5M1104 207.5H1108.5M1104 204.6H1108.5" stroke="#404040" stroke-width="1" fill="none" shape-rendering="crispEdges"/>
<text x="1117" y="37.1" text-anchor="start" font-size="12">10<tspan dy="-5.5"><tspan textLength="6.3" lengthAdjust="spacingAndGlyphs">-</tspan>9</tspan></text>
<text x="1117" y="94.55000000000001" text-anchor="start" font-size="12">10<tspan dy="-5.5"><tspan textLength="6.3" lengthAdjust="spacingAndGlyphs">-</tspan>10</tspan></text>
<text x="1117" y="152.0" text-anchor="start" font-size="12">10<tspan dy="-5.5"><tspan textLength="6.3" lengthAdjust="spacingAndGlyphs">-</tspan>11</tspan></text>
<text x="1117" y="209.45000000000002" text-anchor="start" font-size="12">10<tspan dy="-5.5"><tspan textLength="6.3" lengthAdjust="spacingAndGlyphs">-</tspan>12</tspan></text>
<text x="1165.3" y="123.64999999999999" text-anchor="middle" font-size="12" transform="rotate(90 1165.3 123.64999999999999)" textLength="120.5" lengthAdjust="spacingAndGlyphs">pressure dyne/cm^2</text>
<rect x="95" y="224.2" width="985.7" height="192.40000000000003" fill="#000"/>
<path d="M87 339.5H95M87 300.3H95M87 277.4H95M87 261.1H95M87 248.5H95M87 238.2H95M87 229.5H95M91 407.6H95.5M91 391.3H95.5M91 378.7H95.5M91 368.4H95.5M91 359.7H95.5M91 352.1H95.5M91 345.5H95.5M91 334.1H95.5M91 329.2H95.5M91 324.7H95.5M91 320.5H95.5M91 316.6H95.5M91 312.9H95.5M91 309.5H95.5M91 306.3H95.5M91 303.2H95.5M91 297.5H95.5M91 294.9H95.5M91 292.4H95.5M91 290.0H95.5M91 287.7H95.5M91 285.5H95.5M91 283.3H95.5M91 281.3H95.5M91 279.3H95.5M91 275.5H95.5M91 273.7H95.5M91 272.0H95.5M91 270.3H95.5M91 268.7H95.5M91 267.1H95.5M91 265.5H95.5M91 264.0H95.5M91 262.5H95.5M91 259.7H95.5M91 258.4H95.5M91 257.0H95.5M91 255.7H95.5M91 254.5H95.5M91 253.2H95.5M91 252.0H95.5M91 250.8H95.5M91 249.6H95.5M91 247.4H95.5M91 246.3H95.5M91 245.2H95.5M91 244.1H95.5M91 243.1H95.5M91 242.1H95.5M91 241.1H95.5M91 240.1H95.5M91 239.1H95.5M91 237.3H95.5M91 236.3H95.5M91 235.4H95.5M91 234.5H95.5M91 233.7H95.5M91 232.8H95.5M91 231.9H95.5M91 231.1H95.5M91 230.3H95.5M91 228.7H95.5M91 227.9H95.5M91 227.1H95.5M91 226.3H95.5M91 225.6H95.5M91 224.8H95.5" stroke="#404040" stroke-width="1" fill="none" shape-rendering="crispEdges"/>
<text x="81.5" y="344.1" text-anchor="end" font-size="12">100.</text>
<text x="81.5" y="304.90589456454967" text-anchor="end" font-size="12">200.</text>
<text x="81.5" y="281.97881263549993" text-anchor="end" font-size="12">300.</text>
<text x="81.5" y="265.7117891290993" text-anchor="end" font-size="12">400.</text>
<text x="81.5" y="253.09410543545036" text-anchor="end" font-size="12">500.</text>
<text x="81.5" y="242.7847072000496" text-anchor="end" font-size="12">600.</text>
<text x="81.5" y="234.06823519014375" text-anchor="end" font-size="12">700.</text>
<text x="45.6" y="320.6" text-anchor="middle" font-size="12" transform="rotate(-90 45.6 320.6)" textLength="71" lengthAdjust="spacingAndGlyphs">Energy (keV)</text>
<path d="M136.5 416v-2M177.6 416v-2M218.6 416v-2M259.7 416v-2M300.7 416v-2M341.8 416v-2M382.8 416v-2M423.8 416v-2M464.9 416v-2M505.9 416v-2M547.0 416v-2M588.0 416v-2M629.0 416v-2M670.1 416v-2M711.1 416v-2M752.2 416v-2M793.2 416v-2M834.2 416v-2M875.3 416v-2M916.3 416v-2M957.4 416v-2M998.4 416v-2M1039.5 416v-2" stroke="#666" stroke-width="1" fill="none"/>
<rect x="1092" y="226" width="12" height="190.60000000000002" fill="url(#cb)"/>
<path d="M1104.5 226V416.6M1104 225.6H1112.5M1104 283.1H1112.5M1104 340.5H1112.5M1104 398.0H1112.5M1104 265.8H1108.5M1104 255.6H1108.5M1104 248.5H1108.5M1104 242.9H1108.5M1104 238.3H1108.5M1104 234.5H1108.5M1104 231.2H1108.5M1104 228.2H1108.5M1104 323.2H1108.5M1104 313.1H1108.5M1104 305.9H1108.5M1104 300.3H1108.5M1104 295.8H1108.5M1104 291.9H1108.5M1104 288.6H1108.5M1104 285.7H1108.5M1104 380.7H1108.5M1104 370.5H1108.5M1104 363.4H1108.5M1104 357.8H1108.5M1104 353.2H1108.5M1104 349.4H1108.5M1104 346.1H1108.5M1104 343.1H1108.5M1104 415.2H1108.5M1104 410.7H1108.5M1104 406.8H1108.5M1104 403.5H1108.5M1104 400.6H1108.5" stroke="#404040" stroke-width="1" fill="none" shape-rendering="crispEdges"/>
<text x="1117" y="233.1" text-anchor="start" font-size="12">10<tspan dy="-5.5"><tspan textLength="6.3" lengthAdjust="spacingAndGlyphs">-</tspan>9</tspan></text>
<text x="1117" y="290.55" text-anchor="start" font-size="12">10<tspan dy="-5.5"><tspan textLength="6.3" lengthAdjust="spacingAndGlyphs">-</tspan>10</tspan></text>
<text x="1117" y="348.0" text-anchor="start" font-size="12">10<tspan dy="-5.5"><tspan textLength="6.3" lengthAdjust="spacingAndGlyphs">-</tspan>11</tspan></text>
<text x="1117" y="405.45000000000005" text-anchor="start" font-size="12">10<tspan dy="-5.5"><tspan textLength="6.3" lengthAdjust="spacingAndGlyphs">-</tspan>12</tspan></text>
<text x="1165.3" y="319.6" text-anchor="middle" font-size="12" transform="rotate(90 1165.3 319.6)" textLength="120.5" lengthAdjust="spacingAndGlyphs">pressure dyne/cm^2</text>
<rect x="95.5" y="420.5" width="985" height="88.80000000000001" fill="#fff" stroke="#404040" stroke-width="1" shape-rendering="crispEdges"/>
<path d="M87 436.3H95M87 458.3H95M87 480.3H95M87 502.3H95M91 429.7H95M91 425.8H95M91 423.1H95M91 420.9H95M91 451.7H95M91 447.8H95M91 445.1H95M91 442.9H95M91 441.2H95M91 439.7H95M91 438.4H95M91 437.3H95M91 473.7H95M91 469.8H95M91 467.1H95M91 464.9H95M91 463.2H95M91 461.7H95M91 460.4H95M91 459.3H95M91 495.7H95M91 491.8H95M91 489.1H95M91 486.9H95M91 485.2H95M91 483.7H95M91 482.4H95M91 481.3H95M91 508.9H95M91 507.2H95M91 505.7H95M91 504.4H95M91 503.3H95M136.5 509.3v-3M177.6 509.3v-3M218.6 509.3v-3M259.7 509.3v-3M300.7 509.3v-3M341.8 509.3v-3M382.8 509.3v-3M423.8 509.3v-3M464.9 509.3v-3M505.9 509.3v-3M547.0 509.3v-3M588.0 509.3v-3M629.0 509.3v-3M670.1 509.3v-3M711.1 509.3v-3M752.2 509.3v-3M793.2 509.3v-3M834.2 509.3v-3M875.3 509.3v-3M916.3 509.3v-3M957.4 509.3v-3M998.4 509.3v-3M1039.5 509.3v-3" stroke="#404040" stroke-width="1" fill="none" shape-rendering="crispEdges"/>
<text x="82.2" y="443.7" text-anchor="end" font-size="12">10<tspan dy="-5.5"><tspan textLength="6.3" lengthAdjust="spacingAndGlyphs">-</tspan>9</tspan></text>
<text x="82.2" y="465.7" text-anchor="end" font-size="12">10<tspan dy="-5.5"><tspan textLength="6.3" lengthAdjust="spacingAndGlyphs">-</tspan>10</tspan></text>
<text x="82.2" y="487.7" text-anchor="end" font-size="12">10<tspan dy="-5.5"><tspan textLength="6.3" lengthAdjust="spacingAndGlyphs">-</tspan>11</tspan></text>
<text x="82.2" y="509.7" text-anchor="end" font-size="12">10<tspan dy="-5.5"><tspan textLength="6.3" lengthAdjust="spacingAndGlyphs">-</tspan>12</tspan></text>
<text x="34.2" y="466" text-anchor="middle" font-size="12" transform="rotate(-90 34.2 466)" textLength="68" lengthAdjust="spacingAndGlyphs">P dyn/cm^2</text>
<path d="M104.2 488.7L107.4 472.1L107.4 509.0M131.5 483.0L131.5 509.0M336.4 509.0L336.4 488.7L350.6 473.1L350.6 509.0M360.5 492.2L360.5 509.0M415.3 484.0L415.3 509.0M466.4 493.0L466.4 509.0M487.5 491.0L487.5 509.0M500.7 509.0L500.7 473.8L507.5 462.2L507.5 509.0M541.4 489.0L541.4 509.0M623.4 493.2L623.4 509.0M654.6 496.2L654.6 509.0M750.5 495.3L750.5 509.0M770.7 486.2L770.7 509.0M794.4 509.0L794.4 481.3L798.7 492.6L804.4 487.5L808.3 473.4L815.0 481.3L818.5 483.4L822.5 477.3L822.5 509.0M849.4 509.0L849.4 487.5L852.5 492.6L856.5 491.5L856.5 509.0M863.4 509.0L863.4 489.4L873.5 496.4L880.4 491.5L880.4 509.0M900.3 509.0L900.3 492.5L904.5 487.5L904.5 509.0M910.3 488.3L910.3 509.0M934.5 482.0L934.5 509.0" stroke="#00ee00" stroke-width="1.2" fill="none" stroke-linejoin="round"/>
<path d="M104.2 508.0L104.2 509.0M110.5 506.0L110.5 509.0M125.4 507.0L125.4 509.0M278.3 507.8L278.3 509.0M296.0 509.0L296.0 505.0L297.5 505.0L298.5 509.0M319.4 503.0L319.4 509.0M333.6 503.0L333.6 509.0M352.3 509.0L352.3 505.0L353.5 509.0M357.4 507.8L357.4 509.0M401.3 507.0L401.3 509.0M404.4 507.0L404.4 509.0M447.5 505.0L447.5 509.0L448.5 509.0M467.4 508.0L467.4 509.0M479.5 509.0L480.4 505.0L480.4 509.0M501.4 506.0L501.4 509.0M521.5 508.0L521.5 509.0M540.3 505.0L540.3 509.0M650.5 507.0L650.5 509.0M693.4 508.0L693.4 509.0M759.5 504.0L759.5 509.0M766.5 506.0L766.5 509.0M778.4 508.0L778.4 509.0M790.6 509.0L790.6 499.6L793.0 505.7L793.7 509.0M797.7 509.0L797.7 504.5L799.4 507.0L800.8 508.5L801.5 507.0L803.7 509.0L805.0 504.5L807.6 503.5L809.3 502.0L810.5 502.5L811.4 507.8L812.4 506.4L813.6 509.0L815.4 500.0L816.1 509.0M840.5 505.0L840.5 509.0M846.9 509.0L848.7 503.0L848.7 509.0M860.3 507.0L861.7 509.0M878.7 509.0L880.8 505.0L882.3 505.7L883.7 504.2L885.1 507.8L886.5 503.5L887.9 507.0L889.3 504.5L890.8 503.5L892.2 505.7L892.9 508.5L895.0 505.0L896.4 509.0M896.5 509.0L898.2 505.7L900.0 503.3L901.7 504.2L902.5 509.0M893.5 509.0L896.3 509.0L896.3 505.0L897.5 509.0L898.3 505.8L899.2 501.7L900.8 499.2L902.5 500.8L904.2 504.2L905.3 507.5L905.8 509.0M946.3 507.0L946.3 509.0M972.5 506.0L972.5 509.0M1049.5 508.0L1049.5 509.0" stroke="#ff0000" stroke-width="1.2" fill="none" stroke-linejoin="round"/>
<path d="M104.2 481.3L111.2 495.5L114.8 492.6L118.3 479.4L125.4 490.4L128.5 484.4L131.5 470.2L135.3 485.4L138.6 472.4L142.4 470.2L148.8 474.5L155.2 476.6L159.4 475.2L166.5 478.3L177.1 478.3L186.3 480.4L193.4 482.3L196.5 498.6L200.5 484.4L203.6 494.6L207.3 481.3L210.4 499.7L217.5 475.2L220.3 499.7L224.6 481.6L227.4 480.2L230.5 472.4L234.5 474.5L241.3 473.1L244.4 475.5L248.4 471.4L251.5 473.4L262.0 473.4L267.7 471.7L272.0 471.2L278.3 467.4L285.4 471.4L289.4 469.2L292.5 477.3L295.3 480.4L299.3 481.3L308.8 473.8L312.3 466.3L316.3 467.1L327.2 479.4L333.6 489.4L336.7 473.1L340.7 475.2L347.5 483.7L360.5 476.3L364.4 468.4L371.4 480.2L377.5 473.4L381.7 479.4L384.6 471.7L391.4 475.6L394.5 488.4L401.6 472.4L405.5 480.4L412.5 465.3L415.7 468.1L429.1 472.4L432.4 469.2L435.8 472.4L439.5 471.4L446.5 475.5L449.7 469.2L456.5 497.4L459.6 477.3L463.4 485.4L470.5 482.3L476.6 488.4L480.4 482.3L483.0 509.0L484.0 509.0L487.5 474.5L494.6 486.5L497.4 483.4L500.7 470.2L507.7 488.0L514.5 483.4L517.6 463.4L521.2 477.3L524.4 509.0L528.3 477.3L531.5 467.4L538.6 471.4L545.6 485.4L548.8 478.3L552.4 481.3L555.5 495.5L562.5 473.4L565.8 478.3L572.5 502.5L576.4 499.7L582.5 474.5L589.5 499.7L593.4 478.3L596.5 483.4L599.5 474.5L610.4 485.4L617.5 475.5L620.6 477.3L623.5 485.4L634.4 489.4L637.6 481.3L640.4 478.3L654.6 473.4L661.4 494.6L668.7 480.4L675.5 480.4L681.5 494.0L681.5 509.0M688.3 509.0L688.3 488.4L692.2 493.3L699.6 472.4L712.4 484.4L716.3 499.7L726.5 473.4L729.3 480.4L736.4 468.4L743.5 478.3L746.6 484.4L750.5 480.4L753.4 481.3L757.6 484.4L760.5 474.5L767.5 485.4L770.7 496.4L777.5 484.4L781.3 486.2L784.5 480.4L791.6 491.5L798.7 478.3L802.2 501.4L805.1 503.5L807.6 501.8L815.7 483.4L818.5 509.0L819.5 509.0L822.5 476.3L825.6 492.6L828.7 479.4L839.5 471.4L845.7 486.2L852.5 482.3L852.5 509.0M863.4 489.4L863.4 481.3L866.3 485.4L873.8 480.4L883.4 486.5L890.5 477.3L904.2 488.3L910.3 488.3L914.7 475.3L927.5 477.5L934.5 472.5L938.3 481.3L941.7 473.3L945.5 470.3L951.7 477.5L955.5 472.5L958.3 477.5L962.5 472.5L965.8 472.5L968.3 476.7L975.5 497.5L979.2 487.2L986.3 474.5L989.7 480.3L996.7 468.3L1000.0 474.2L1003.8 476.7L1006.7 480.3L1009.2 480.3L1013.3 485.5L1020.5 479.2L1023.3 469.2L1030.5 467.5L1033.7 473.3L1037.5 470.3L1050.3 474.5L1057.5 473.3L1064.5 489.5L1068.7 472.5L1071.3 495.5L1074.2 484.2L1078.7 476.2" stroke="#1010f0" stroke-width="1.1" fill="none" stroke-linejoin="round"/>
<path d="M1091 427.5L1103 432" stroke="#1010f0" stroke-width="1.2"/>
<text x="1107" y="433.7" text-anchor="start" font-size="12" textLength="52.5" lengthAdjust="spacingAndGlyphs">CHEMS-P</text>
<path d="M1091 444.5L1103 449" stroke="#ff0000" stroke-width="1.2"/>
<text x="1107" y="450.7" text-anchor="start" font-size="12" textLength="52.5" lengthAdjust="spacingAndGlyphs">LEMMS-P</text>
<path d="M1091 461.5L1103 466" stroke="#00ee00" stroke-width="1.2"/>
<text x="1107" y="467.7" text-anchor="start" font-size="12" textLength="52.5" lengthAdjust="spacingAndGlyphs">CHEMS-O</text>
<rect x="95" y="513.2" width="985.7" height="178.29999999999995" fill="#000"/>
<path d="M87 554.2H95M87 606.6H95M87 659.0H95M91 686.4H95M91 679.9H95M91 674.8H95M91 670.6H95M91 667.1H95M91 664.1H95M91 661.4H95M91 643.2H95M91 634.0H95M91 627.5H95M91 622.4H95M91 618.2H95M91 614.7H95M91 611.7H95M91 609.0H95M91 590.8H95M91 581.6H95M91 575.1H95M91 570.0H95M91 565.8H95M91 562.3H95M91 559.3H95M91 556.6H95M91 538.4H95M91 529.2H95M91 522.7H95M91 517.6H95M91 513.4H95" stroke="#404040" stroke-width="1" fill="none" shape-rendering="crispEdges"/>
<text x="81.6" y="561.6" text-anchor="end" font-size="12">10<tspan dy="-5.5">4</tspan></text>
<text x="81.6" y="614.0" text-anchor="end" font-size="12">10<tspan dy="-5.5">3</tspan></text>
<text x="81.6" y="666.4" text-anchor="end" font-size="12">10<tspan dy="-5.5">2</tspan></text>
<text x="9.4" y="537.2" text-anchor="start" font-size="12" textLength="64.7" lengthAdjust="spacingAndGlyphs">LEMMS Ions</text>
<text x="48.8" y="602.8" text-anchor="middle" font-size="12" transform="rotate(-90 48.8 602.8)" textLength="71" lengthAdjust="spacingAndGlyphs">Energy (keV)</text>
<linearGradient id="g1" gradientUnits="userSpaceOnUse" x1="0" y1="677" x2="0" y2="690">
<stop offset="0.00" stop-color="#c9e610"/>
<stop offset="0.25" stop-color="#d4df10"/>
<stop offset="0.50" stop-color="#dfd910"/>
<stop offset="0.75" stop-color="#e3cd10"/>
<stop offset="1.00" stop-color="#e7bf10"/>
</linearGradient>
<path d="M96 677h1v13h-1zM98 677h6v13h-6zM105 677h5v13h-5zM112 677h10v13h-10zM123 677h2v13h-2zM127 677h1v13h-1zM132 677h1v13h-1zM135 677h1v13h-1zM139 677h1v13h-1zM141 677h1v13h-1zM153 677h1v13h-1zM155 677h3v13h-3zM159 677h1v13h-1zM161 677h1v13h-1zM167 677h1v13h-1zM169 677h1v13h-1zM176 677h2v13h-2zM179 677h1v13h-1zM184 677h1v13h-1zM187 677h1v13h-1zM190 677h1v13h-1zM192 677h2v13h-2zM198 677h2v13h-2zM202 677h1v13h-1zM204 677h1v13h-1zM209 677h1v13h-1zM211 677h1v13h-1zM213 677h1v13h-1zM216 677h1v13h-1zM219 677h1v13h-1zM224 677h1v13h-1zM226 677h1v13h-1zM228 677h1v13h-1zM230 677h1v13h-1zM233 677h1v13h-1zM236 677h1v13h-1zM238 677h1v13h-1zM240 677h1v13h-1zM242 677h2v13h-2zM246 677h1v13h-1zM249 677h2v13h-2zM253 677h1v13h-1zM256 677h2v13h-2zM259 677h2v13h-2zM262 677h8v13h-8zM271 677h7v13h-7zM279 677h1v13h-1zM284 677h2v13h-2zM287 677h3v13h-3zM291 677h3v13h-3zM295 677h25v13h-25zM321 677h1v13h-1zM323 677h1v13h-1zM325 677h14v13h-14zM340 677h2v13h-2zM343 677h7v13h-7zM351 677h2v13h-2zM354 677h1v13h-1zM356 677h6v13h-6zM363 677h1v13h-1zM365 677h6v13h-6zM372 677h6v13h-6zM379 677h2v13h-2zM382 677h21v13h-21zM404 677h1v13h-1zM408 677h3v13h-3zM414 677h4v13h-4zM420 677h1v13h-1zM422 677h1v13h-1zM424 677h3v13h-3zM429 677h1v13h-1zM432 677h1v13h-1zM436 677h1v13h-1zM440 677h3v13h-3zM450 677h2v13h-2zM454 677h1v13h-1zM456 677h4v13h-4zM461 677h2v13h-2zM464 677h7v13h-7zM472 677h2v13h-2zM475 677h1v13h-1zM477 677h7v13h-7zM485 677h1v13h-1zM487 677h4v13h-4zM492 677h2v13h-2zM495 677h4v13h-4zM500 677h3v13h-3zM504 677h1v13h-1zM506 677h3v13h-3zM510 677h13v13h-13zM524 677h5v13h-5zM530 677h4v13h-4zM535 677h2v13h-2zM538 677h1v13h-1zM540 677h1v13h-1zM547 677h2v13h-2zM552 677h9v13h-9zM570 677h1v13h-1zM577 677h1v13h-1zM586 677h1v13h-1zM593 677h1v13h-1zM596 677h2v13h-2zM611 677h1v13h-1zM615 677h1v13h-1zM627 677h1v13h-1zM629 677h1v13h-1zM633 677h1v13h-1zM644 677h1v13h-1zM646 677h1v13h-1zM649 677h1v13h-1zM653 677h3v13h-3zM661 677h1v13h-1zM664 677h1v13h-1zM666 677h1v13h-1zM668 677h2v13h-2zM676 677h2v13h-2zM686 677h1v13h-1zM690 677h3v13h-3zM696 677h1v13h-1zM699 677h1v13h-1zM702 677h2v13h-2zM706 677h1v13h-1zM715 677h5v13h-5zM721 677h4v13h-4zM727 677h15v13h-15zM743 677h4v13h-4zM748 677h6v13h-6zM755 677h26v13h-26zM785 677h130v13h-130zM918 677h2v13h-2zM922 677h7v13h-7zM930 677h2v13h-2zM935 677h1v13h-1zM938 677h3v13h-3zM943 677h1v13h-1zM945 677h1v13h-1zM947 677h3v13h-3zM952 677h3v13h-3zM959 677h1v13h-1zM962 677h2v13h-2zM967 677h2v13h-2zM971 677h3v13h-3zM979 677h2v13h-2zM1003 677h2v13h-2zM1012 677h1v13h-1zM1017 677h1v13h-1zM1019 677h4v13h-4zM1025 677h1v13h-1zM1027 677h1v13h-1zM1032 677h1v13h-1zM1034 677h1v13h-1zM1046 677h1v13h-1zM1048 677h4v13h-4zM1055 677h2v13h-2zM1060 677h4v13h-4zM1065 677h1v13h-1zM1069 677h1v13h-1zM1071 677h2v13h-2zM1074 677h5v13h-5z" fill="url(#g1)" shape-rendering="crispEdges"/>
<linearGradient id="g2" gradientUnits="userSpaceOnUse" x1="0" y1="664" x2="0" y2="677">
<stop offset="0.00" stop-color="#79df32"/>
<stop offset="0.25" stop-color="#92e625"/>
<stop offset="0.50" stop-color="#abed17"/>
<stop offset="0.75" stop-color="#beed10"/>
<stop offset="1.00" stop-color="#c9e610"/>
</linearGradient>
<path d="M96 664h1v13h-1zM98 664h6v13h-6zM105 664h5v13h-5zM112 664h9v13h-9zM123 664h2v13h-2zM127 664h1v13h-1zM132 664h1v13h-1zM169 664h1v13h-1zM184 664h1v13h-1zM187 664h1v13h-1zM192 664h1v13h-1zM198 664h2v13h-2zM204 664h1v13h-1zM209 664h1v13h-1zM216 664h1v13h-1zM219 664h1v13h-1zM224 664h1v13h-1zM226 664h1v13h-1zM230 664h1v13h-1zM233 664h1v13h-1zM236 664h1v13h-1zM238 664h1v13h-1zM240 664h1v13h-1zM249 664h2v13h-2zM253 664h1v13h-1zM259 664h1v13h-1zM262 664h2v13h-2zM265 664h5v13h-5zM271 664h1v13h-1zM274 664h4v13h-4zM279 664h1v13h-1zM285 664h1v13h-1zM287 664h3v13h-3zM297 664h11v13h-11zM312 664h4v13h-4zM318 664h2v13h-2zM321 664h1v13h-1zM323 664h1v13h-1zM330 664h2v13h-2zM334 664h5v13h-5zM343 664h2v13h-2zM351 664h2v13h-2zM354 664h1v13h-1zM356 664h3v13h-3zM365 664h3v13h-3zM370 664h1v13h-1zM372 664h5v13h-5zM379 664h2v13h-2zM382 664h11v13h-11zM397 664h2v13h-2zM400 664h1v13h-1zM404 664h1v13h-1zM414 664h2v13h-2zM424 664h3v13h-3zM429 664h1v13h-1zM432 664h1v13h-1zM441 664h2v13h-2zM451 664h1v13h-1zM459 664h1v13h-1zM464 664h1v13h-1zM466 664h2v13h-2zM469 664h1v13h-1zM472 664h2v13h-2zM482 664h1v13h-1zM485 664h1v13h-1zM487 664h1v13h-1zM490 664h1v13h-1zM492 664h2v13h-2zM495 664h1v13h-1zM498 664h1v13h-1zM502 664h1v13h-1zM506 664h3v13h-3zM516 664h3v13h-3zM521 664h2v13h-2zM524 664h5v13h-5zM530 664h3v13h-3zM535 664h2v13h-2zM538 664h1v13h-1zM540 664h1v13h-1zM547 664h2v13h-2zM552 664h1v13h-1zM555 664h4v13h-4zM560 664h1v13h-1zM611 664h1v13h-1zM633 664h1v13h-1zM644 664h1v13h-1zM646 664h1v13h-1zM649 664h1v13h-1zM653 664h3v13h-3zM668 664h2v13h-2zM676 664h1v13h-1zM690 664h2v13h-2zM696 664h1v13h-1zM699 664h1v13h-1zM702 664h2v13h-2zM706 664h1v13h-1zM717 664h2v13h-2zM727 664h2v13h-2zM730 664h7v13h-7zM739 664h2v13h-2zM743 664h2v13h-2zM748 664h2v13h-2zM752 664h2v13h-2zM755 664h1v13h-1zM764 664h3v13h-3zM769 664h8v13h-8zM779 664h1v13h-1zM785 664h130v13h-130zM918 664h2v13h-2zM922 664h7v13h-7zM931 664h1v13h-1zM947 664h3v13h-3zM952 664h1v13h-1zM954 664h1v13h-1zM962 664h2v13h-2zM967 664h1v13h-1zM973 664h1v13h-1zM979 664h2v13h-2zM1012 664h1v13h-1zM1017 664h1v13h-1zM1020 664h1v13h-1zM1025 664h1v13h-1zM1027 664h1v13h-1zM1034 664h1v13h-1zM1048 664h2v13h-2zM1055 664h2v13h-2zM1060 664h3v13h-3zM1071 664h2v13h-2zM1077 664h2v13h-2z" fill="url(#g2)" shape-rendering="crispEdges"/>
<linearGradient id="g3" gradientUnits="userSpaceOnUse" x1="0" y1="648" x2="0" y2="664">
<stop offset="0.00" stop-color="#18b870"/>
<stop offset="0.25" stop-color="#2fc261"/>
<stop offset="0.50" stop-color="#45cc52"/>
<stop offset="0.75" stop-color="#5bd643"/>
<stop offset="1.00" stop-color="#79df32"/>
</linearGradient>
<path d="M96 648h1v16h-1zM100 648h1v16h-1zM102 648h1v16h-1zM104 648h3v16h-3zM109 648h2v16h-2zM112 648h2v16h-2zM115 648h6v16h-6zM136 648h1v16h-1zM156 648h1v16h-1zM172 648h1v16h-1zM192 648h1v16h-1zM195 648h2v16h-2zM199 648h1v16h-1zM203 648h1v16h-1zM220 648h1v16h-1zM222 648h1v16h-1zM228 648h1v16h-1zM236 648h1v16h-1zM238 648h1v16h-1zM253 648h1v16h-1zM259 648h1v16h-1zM262 648h2v16h-2zM265 648h2v16h-2zM276 648h2v16h-2zM279 648h1v16h-1zM284 648h1v16h-1zM287 648h3v16h-3zM299 648h1v16h-1zM301 648h1v16h-1zM310 648h1v16h-1zM312 648h3v16h-3zM331 648h2v16h-2zM365 648h2v16h-2zM373 648h3v16h-3zM379 648h1v16h-1zM382 648h3v16h-3zM388 648h1v16h-1zM391 648h2v16h-2zM397 648h2v16h-2zM406 648h1v16h-1zM421 648h1v16h-1zM436 648h2v16h-2zM445 648h2v16h-2zM459 648h1v16h-1zM464 648h1v16h-1zM466 648h2v16h-2zM469 648h1v16h-1zM484 648h2v16h-2zM491 648h1v16h-1zM498 648h1v16h-1zM506 648h1v16h-1zM518 648h1v16h-1zM520 648h1v16h-1zM524 648h1v16h-1zM530 648h1v16h-1zM538 648h1v16h-1zM540 648h1v16h-1zM543 648h1v16h-1zM547 648h1v16h-1zM550 648h1v16h-1zM560 648h1v16h-1zM562 648h2v16h-2zM572 648h1v16h-1zM585 648h1v16h-1zM598 648h1v16h-1zM606 648h2v16h-2zM612 648h1v16h-1zM617 648h1v16h-1zM620 648h2v16h-2zM625 648h2v16h-2zM655 648h1v16h-1zM658 648h1v16h-1zM664 648h2v16h-2zM668 648h1v16h-1zM691 648h1v16h-1zM694 648h1v16h-1zM729 648h1v16h-1zM731 648h1v16h-1zM735 648h1v16h-1zM739 648h1v16h-1zM744 648h1v16h-1zM763 648h4v16h-4zM769 648h2v16h-2zM773 648h2v16h-2zM779 648h1v16h-1zM797 648h4v16h-4zM802 648h4v16h-4zM807 648h1v16h-1zM822 648h2v16h-2zM826 648h8v16h-8zM835 648h2v16h-2zM839 648h3v16h-3zM843 648h3v16h-3zM848 648h1v16h-1zM853 648h1v16h-1zM861 648h1v16h-1zM864 648h1v16h-1zM869 648h2v16h-2zM873 648h1v16h-1zM878 648h3v16h-3zM884 648h5v16h-5zM893 648h1v16h-1zM898 648h2v16h-2zM905 648h1v16h-1zM908 648h2v16h-2zM911 648h2v16h-2zM915 648h1v16h-1zM919 648h1v16h-1zM929 648h1v16h-1zM949 648h1v16h-1zM953 648h1v16h-1zM969 648h1v16h-1zM973 648h1v16h-1zM996 648h1v16h-1zM1001 648h2v16h-2zM1030 648h1v16h-1zM1045 648h1v16h-1zM1048 648h2v16h-2zM1062 648h1v16h-1z" fill="url(#g3)" shape-rendering="crispEdges"/>
<linearGradient id="g4" gradientUnits="userSpaceOnUse" x1="0" y1="631" x2="0" y2="648">
<stop offset="0.00" stop-color="#13a989"/>
<stop offset="0.25" stop-color="#14ad83"/>
<stop offset="0.50" stop-color="#16b07c"/>
<stop offset="0.75" stop-color="#17b476"/>
<stop offset="1.00" stop-color="#18b870"/>
</linearGradient>
<path d="M96 631h1v17h-1zM102 631h1v17h-1zM104 631h1v17h-1zM106 631h1v17h-1zM108 631h1v17h-1zM114 631h1v17h-1zM116 631h1v17h-1zM118 631h2v17h-2zM127 631h1v17h-1zM132 631h1v17h-1zM150 631h2v17h-2zM156 631h1v17h-1zM172 631h1v17h-1zM190 631h1v17h-1zM195 631h2v17h-2zM199 631h1v17h-1zM203 631h1v17h-1zM220 631h2v17h-2zM233 631h1v17h-1zM238 631h1v17h-1zM257 631h1v17h-1zM262 631h2v17h-2zM265 631h2v17h-2zM272 631h1v17h-1zM276 631h2v17h-2zM279 631h1v17h-1zM284 631h1v17h-1zM305 631h1v17h-1zM313 631h2v17h-2zM316 631h1v17h-1zM327 631h1v17h-1zM330 631h2v17h-2zM356 631h1v17h-1zM365 631h2v17h-2zM373 631h3v17h-3zM379 631h1v17h-1zM384 631h1v17h-1zM388 631h1v17h-1zM391 631h1v17h-1zM397 631h1v17h-1zM403 631h1v17h-1zM408 631h1v17h-1zM415 631h1v17h-1zM427 631h1v17h-1zM445 631h2v17h-2zM458 631h1v17h-1zM466 631h2v17h-2zM469 631h2v17h-2zM474 631h1v17h-1zM484 631h2v17h-2zM498 631h1v17h-1zM505 631h1v17h-1zM518 631h3v17h-3zM530 631h1v17h-1zM543 631h1v17h-1zM547 631h1v17h-1zM550 631h1v17h-1zM562 631h2v17h-2zM572 631h1v17h-1zM585 631h1v17h-1zM589 631h1v17h-1zM598 631h1v17h-1zM604 631h1v17h-1zM606 631h2v17h-2zM617 631h1v17h-1zM620 631h2v17h-2zM625 631h1v17h-1zM646 631h1v17h-1zM655 631h1v17h-1zM658 631h1v17h-1zM664 631h2v17h-2zM669 631h2v17h-2zM691 631h1v17h-1zM698 631h1v17h-1zM701 631h2v17h-2zM726 631h2v17h-2zM729 631h1v17h-1zM731 631h1v17h-1zM737 631h2v17h-2zM744 631h2v17h-2zM763 631h1v17h-1zM765 631h2v17h-2zM769 631h2v17h-2zM773 631h2v17h-2zM798 631h1v17h-1zM802 631h3v17h-3zM814 631h1v17h-1zM821 631h3v17h-3zM827 631h2v17h-2zM830 631h1v17h-1zM832 631h2v17h-2zM836 631h2v17h-2zM839 631h2v17h-2zM842 631h2v17h-2zM848 631h1v17h-1zM856 631h1v17h-1zM869 631h2v17h-2zM882 631h1v17h-1zM886 631h2v17h-2zM899 631h1v17h-1zM904 631h2v17h-2zM907 631h1v17h-1zM909 631h1v17h-1zM915 631h1v17h-1zM929 631h1v17h-1zM953 631h1v17h-1zM969 631h1v17h-1zM973 631h1v17h-1zM985 631h1v17h-1zM996 631h1v17h-1zM1001 631h2v17h-2zM1016 631h1v17h-1zM1045 631h1v17h-1zM1051 631h1v17h-1zM1053 631h1v17h-1zM1055 631h1v17h-1zM1062 631h1v17h-1zM1072 631h1v17h-1zM1075 631h1v17h-1z" fill="url(#g4)" shape-rendering="crispEdges"/>
<linearGradient id="g5" gradientUnits="userSpaceOnUse" x1="0" y1="619" x2="0" y2="631">
<stop offset="0.00" stop-color="#10a098"/>
<stop offset="0.25" stop-color="#11a294"/>
<stop offset="0.50" stop-color="#11a491"/>
<stop offset="0.75" stop-color="#12a78d"/>
<stop offset="1.00" stop-color="#13a989"/>
</linearGradient>
<path d="M99 619h1v12h-1zM102 619h1v12h-1zM104 619h1v12h-1zM108 619h1v12h-1zM114 619h1v12h-1zM119 619h1v12h-1zM121 619h1v12h-1zM127 619h1v12h-1zM132 619h1v12h-1zM150 619h2v12h-2zM156 619h1v12h-1zM182 619h1v12h-1zM190 619h1v12h-1zM199 619h1v12h-1zM203 619h1v12h-1zM220 619h2v12h-2zM228 619h1v12h-1zM230 619h1v12h-1zM234 619h1v12h-1zM238 619h1v12h-1zM257 619h1v12h-1zM262 619h2v12h-2zM265 619h2v12h-2zM279 619h1v12h-1zM305 619h1v12h-1zM313 619h1v12h-1zM325 619h1v12h-1zM328 619h1v12h-1zM330 619h1v12h-1zM356 619h1v12h-1zM370 619h2v12h-2zM374 619h2v12h-2zM384 619h1v12h-1zM403 619h1v12h-1zM408 619h1v12h-1zM428 619h2v12h-2zM445 619h1v12h-1zM449 619h1v12h-1zM455 619h2v12h-2zM458 619h1v12h-1zM470 619h1v12h-1zM484 619h2v12h-2zM505 619h1v12h-1zM518 619h3v12h-3zM530 619h1v12h-1zM543 619h1v12h-1zM547 619h1v12h-1zM550 619h1v12h-1zM562 619h2v12h-2zM566 619h1v12h-1zM578 619h1v12h-1zM585 619h1v12h-1zM603 619h2v12h-2zM606 619h2v12h-2zM617 619h1v12h-1zM625 619h1v12h-1zM646 619h1v12h-1zM662 619h1v12h-1zM682 619h1v12h-1zM685 619h1v12h-1zM698 619h1v12h-1zM724 619h1v12h-1zM726 619h2v12h-2zM729 619h1v12h-1zM731 619h1v12h-1zM737 619h2v12h-2zM743 619h3v12h-3zM751 619h2v12h-2zM765 619h2v12h-2zM769 619h2v12h-2zM773 619h2v12h-2zM780 619h2v12h-2zM784 619h1v12h-1zM790 619h2v12h-2zM797 619h2v12h-2zM800 619h1v12h-1zM802 619h3v12h-3zM821 619h1v12h-1zM832 619h2v12h-2zM856 619h1v12h-1zM869 619h3v12h-3zM877 619h1v12h-1zM882 619h2v12h-2zM902 619h1v12h-1zM904 619h1v12h-1zM907 619h1v12h-1zM909 619h1v12h-1zM915 619h1v12h-1zM929 619h1v12h-1zM953 619h1v12h-1zM956 619h1v12h-1zM996 619h1v12h-1zM1016 619h1v12h-1zM1042 619h1v12h-1zM1045 619h1v12h-1zM1051 619h3v12h-3zM1055 619h1v12h-1zM1072 619h1v12h-1zM1075 619h2v12h-2z" fill="url(#g5)" shape-rendering="crispEdges"/>
<linearGradient id="g6" gradientUnits="userSpaceOnUse" x1="0" y1="606" x2="0" y2="619">
<stop offset="0.00" stop-color="#1092b1"/>
<stop offset="0.25" stop-color="#1095aa"/>
<stop offset="0.50" stop-color="#1099a4"/>
<stop offset="0.75" stop-color="#109c9e"/>
<stop offset="1.00" stop-color="#10a098"/>
</linearGradient>
<path d="M96 606h1v13h-1zM99 606h2v13h-2zM102 606h1v13h-1zM104 606h1v13h-1zM108 606h1v13h-1zM119 606h1v13h-1zM124 606h1v13h-1zM127 606h1v13h-1zM150 606h2v13h-2zM156 606h1v13h-1zM166 606h1v13h-1zM171 606h1v13h-1zM179 606h1v13h-1zM182 606h1v13h-1zM190 606h1v13h-1zM199 606h1v13h-1zM226 606h1v13h-1zM228 606h1v13h-1zM234 606h1v13h-1zM245 606h1v13h-1zM265 606h2v13h-2zM269 606h2v13h-2zM274 606h1v13h-1zM279 606h1v13h-1zM305 606h2v13h-2zM313 606h1v13h-1zM317 606h1v13h-1zM325 606h1v13h-1zM328 606h3v13h-3zM346 606h1v13h-1zM362 606h1v13h-1zM370 606h2v13h-2zM374 606h2v13h-2zM384 606h1v13h-1zM400 606h1v13h-1zM425 606h1v13h-1zM428 606h1v13h-1zM433 606h1v13h-1zM441 606h1v13h-1zM445 606h1v13h-1zM453 606h1v13h-1zM459 606h2v13h-2zM470 606h1v13h-1zM482 606h1v13h-1zM505 606h1v13h-1zM518 606h3v13h-3zM530 606h1v13h-1zM538 606h1v13h-1zM541 606h1v13h-1zM543 606h1v13h-1zM550 606h1v13h-1zM560 606h1v13h-1zM562 606h2v13h-2zM566 606h1v13h-1zM572 606h1v13h-1zM578 606h1v13h-1zM585 606h1v13h-1zM603 606h5v13h-5zM617 606h1v13h-1zM625 606h1v13h-1zM646 606h1v13h-1zM663 606h1v13h-1zM665 606h1v13h-1zM685 606h1v13h-1zM688 606h2v13h-2zM693 606h1v13h-1zM698 606h1v13h-1zM700 606h1v13h-1zM708 606h1v13h-1zM711 606h2v13h-2zM723 606h1v13h-1zM726 606h2v13h-2zM731 606h1v13h-1zM737 606h3v13h-3zM743 606h1v13h-1zM745 606h1v13h-1zM748 606h1v13h-1zM765 606h2v13h-2zM780 606h2v13h-2zM784 606h1v13h-1zM786 606h1v13h-1zM790 606h2v13h-2zM797 606h2v13h-2zM800 606h1v13h-1zM802 606h3v13h-3zM806 606h1v13h-1zM810 606h1v13h-1zM831 606h3v13h-3zM853 606h1v13h-1zM856 606h1v13h-1zM863 606h1v13h-1zM869 606h3v13h-3zM877 606h1v13h-1zM882 606h1v13h-1zM890 606h1v13h-1zM902 606h3v13h-3zM913 606h3v13h-3zM929 606h1v13h-1zM945 606h1v13h-1zM986 606h1v13h-1zM992 606h2v13h-2zM1016 606h1v13h-1zM1020 606h1v13h-1zM1024 606h2v13h-2zM1035 606h1v13h-1zM1042 606h2v13h-2zM1045 606h1v13h-1zM1052 606h1v13h-1zM1055 606h1v13h-1zM1076 606h1v13h-1z" fill="url(#g6)" shape-rendering="crispEdges"/>
<linearGradient id="g7" gradientUnits="userSpaceOnUse" x1="0" y1="584" x2="0" y2="606">
<stop offset="0.00" stop-color="#1048ed"/>
<stop offset="0.25" stop-color="#105de8"/>
<stop offset="0.50" stop-color="#1070db"/>
<stop offset="0.75" stop-color="#1082cd"/>
<stop offset="1.00" stop-color="#108eb8"/>
</linearGradient>
<path d="M96 584h1v22h-1zM99 584h2v22h-2zM102 584h1v22h-1zM111 584h3v22h-3zM124 584h1v22h-1zM127 584h1v22h-1zM134 584h1v22h-1zM141 584h2v22h-2zM147 584h2v22h-2zM161 584h1v22h-1zM171 584h1v22h-1zM173 584h2v22h-2zM180 584h1v22h-1zM184 584h1v22h-1zM190 584h1v22h-1zM198 584h2v22h-2zM206 584h1v22h-1zM209 584h1v22h-1zM211 584h1v22h-1zM215 584h1v22h-1zM225 584h2v22h-2zM231 584h1v22h-1zM234 584h1v22h-1zM241 584h2v22h-2zM245 584h1v22h-1zM253 584h2v22h-2zM257 584h1v22h-1zM259 584h2v22h-2zM263 584h1v22h-1zM265 584h1v22h-1zM269 584h2v22h-2zM273 584h3v22h-3zM288 584h1v22h-1zM293 584h1v22h-1zM297 584h1v22h-1zM300 584h2v22h-2zM303 584h1v22h-1zM306 584h1v22h-1zM310 584h1v22h-1zM317 584h1v22h-1zM321 584h2v22h-2zM325 584h1v22h-1zM328 584h1v22h-1zM334 584h1v22h-1zM336 584h1v22h-1zM339 584h1v22h-1zM352 584h2v22h-2zM357 584h2v22h-2zM360 584h1v22h-1zM362 584h1v22h-1zM364 584h1v22h-1zM370 584h3v22h-3zM374 584h2v22h-2zM392 584h2v22h-2zM395 584h1v22h-1zM400 584h1v22h-1zM414 584h1v22h-1zM425 584h1v22h-1zM430 584h1v22h-1zM440 584h2v22h-2zM443 584h3v22h-3zM453 584h1v22h-1zM456 584h1v22h-1zM458 584h1v22h-1zM461 584h1v22h-1zM470 584h1v22h-1zM475 584h1v22h-1zM482 584h2v22h-2zM486 584h1v22h-1zM492 584h2v22h-2zM504 584h2v22h-2zM510 584h1v22h-1zM513 584h2v22h-2zM530 584h1v22h-1zM533 584h1v22h-1zM535 584h2v22h-2zM538 584h1v22h-1zM540 584h1v22h-1zM544 584h1v22h-1zM550 584h1v22h-1zM552 584h1v22h-1zM560 584h1v22h-1zM572 584h1v22h-1zM578 584h1v22h-1zM593 584h1v22h-1zM601 584h2v22h-2zM608 584h2v22h-2zM613 584h1v22h-1zM619 584h1v22h-1zM621 584h2v22h-2zM631 584h1v22h-1zM638 584h1v22h-1zM641 584h1v22h-1zM643 584h1v22h-1zM665 584h1v22h-1zM685 584h2v22h-2zM688 584h2v22h-2zM693 584h2v22h-2zM697 584h1v22h-1zM700 584h1v22h-1zM704 584h1v22h-1zM708 584h1v22h-1zM711 584h2v22h-2zM715 584h1v22h-1zM717 584h1v22h-1zM719 584h2v22h-2zM723 584h1v22h-1zM726 584h2v22h-2zM734 584h1v22h-1zM737 584h3v22h-3zM743 584h1v22h-1zM745 584h1v22h-1zM753 584h1v22h-1zM762 584h2v22h-2zM784 584h1v22h-1zM786 584h1v22h-1zM790 584h2v22h-2zM800 584h1v22h-1zM805 584h1v22h-1zM809 584h3v22h-3zM818 584h1v22h-1zM830 584h1v22h-1zM832 584h2v22h-2zM853 584h1v22h-1zM856 584h1v22h-1zM859 584h2v22h-2zM862 584h2v22h-2zM866 584h1v22h-1zM868 584h1v22h-1zM871 584h1v22h-1zM877 584h1v22h-1zM884 584h1v22h-1zM890 584h1v22h-1zM902 584h1v22h-1zM907 584h1v22h-1zM913 584h3v22h-3zM919 584h2v22h-2zM929 584h1v22h-1zM939 584h2v22h-2zM951 584h1v22h-1zM954 584h1v22h-1zM966 584h1v22h-1zM986 584h1v22h-1zM988 584h1v22h-1zM994 584h1v22h-1zM999 584h2v22h-2zM1019 584h2v22h-2zM1027 584h2v22h-2zM1035 584h2v22h-2zM1040 584h4v22h-4zM1045 584h2v22h-2zM1052 584h1v22h-1zM1064 584h1v22h-1zM1069 584h1v22h-1zM1071 584h1v22h-1zM1076 584h1v22h-1zM1079 584h1v22h-1zM133 595h1v11h-1zM159 595h1v11h-1zM320 595h1v11h-1zM331 595h2v11h-2zM452 595h1v11h-1zM459 595h1v11h-1zM508 595h1v11h-1zM543 595h1v11h-1zM710 595h1v11h-1zM751 595h1v11h-1zM971 595h1v11h-1zM982 595h1v11h-1zM992 595h1v11h-1zM121 584h1v11h-1zM202 584h2v11h-2zM207 584h1v11h-1zM233 584h1v11h-1zM255 584h1v11h-1zM287 584h1v11h-1zM294 584h2v11h-2zM377 584h1v11h-1zM451 584h1v11h-1zM520 584h1v11h-1zM565 584h1v11h-1zM568 584h2v11h-2zM618 584h1v11h-1zM627 584h1v11h-1zM1053 584h1v11h-1zM1060 584h1v11h-1z" fill="url(#g7)" shape-rendering="crispEdges"/>
<linearGradient id="g8" gradientUnits="userSpaceOnUse" x1="0" y1="555" x2="0" y2="584">
<stop offset="0.00" stop-color="#060b88"/>
<stop offset="0.25" stop-color="#0912a8"/>
<stop offset="0.50" stop-color="#0c19c3"/>
<stop offset="0.75" stop-color="#1020de"/>
<stop offset="1.00" stop-color="#1030e5"/>
</linearGradient>
<path d="M101 555h2v29h-2zM114 555h2v29h-2zM122 555h1v29h-1zM142 555h1v29h-1zM145 555h1v29h-1zM150 555h1v29h-1zM195 555h1v29h-1zM204 555h1v29h-1zM206 555h1v29h-1zM223 555h2v29h-2zM234 555h2v29h-2zM270 555h2v29h-2zM273 555h1v29h-1zM279 555h1v29h-1zM284 555h1v29h-1zM287 555h1v29h-1zM299 555h2v29h-2zM307 555h1v29h-1zM318 555h1v29h-1zM323 555h1v29h-1zM326 555h2v29h-2zM333 555h1v29h-1zM343 555h1v29h-1zM351 555h1v29h-1zM363 555h2v29h-2zM377 555h1v29h-1zM404 555h1v29h-1zM407 555h1v29h-1zM412 555h2v29h-2zM416 555h1v29h-1zM428 555h1v29h-1zM432 555h1v29h-1zM445 555h2v29h-2zM457 555h1v29h-1zM462 555h1v29h-1zM476 555h1v29h-1zM486 555h1v29h-1zM500 555h1v29h-1zM507 555h2v29h-2zM515 555h1v29h-1zM520 555h1v29h-1zM536 555h2v29h-2zM540 555h2v29h-2zM558 555h1v29h-1zM583 555h1v29h-1zM585 555h1v29h-1zM588 555h1v29h-1zM607 555h1v29h-1zM625 555h1v29h-1zM634 555h1v29h-1zM656 555h1v29h-1zM698 555h1v29h-1zM702 555h1v29h-1zM733 555h2v29h-2zM740 555h2v29h-2zM756 555h2v29h-2zM767 555h1v29h-1zM773 555h2v29h-2zM809 555h1v29h-1zM826 555h1v29h-1zM839 555h2v29h-2zM870 555h1v29h-1zM890 555h1v29h-1zM902 555h2v29h-2zM907 555h1v29h-1zM928 555h1v29h-1zM978 555h1v29h-1zM989 555h1v29h-1zM1017 555h2v29h-2zM1021 555h1v29h-1zM1023 555h2v29h-2zM1047 555h1v29h-1zM1052 555h1v29h-1zM1063 555h1v29h-1zM1067 555h1v29h-1zM96 570h1v14h-1zM121 570h1v14h-1zM126 570h2v14h-2zM129 570h1v14h-1zM131 570h2v14h-2zM139 570h1v14h-1zM182 570h1v14h-1zM200 570h1v14h-1zM314 570h1v14h-1zM360 570h1v14h-1zM392 570h1v14h-1zM423 570h2v14h-2zM435 570h1v14h-1zM439 570h1v14h-1zM442 570h1v14h-1zM449 570h2v14h-2zM468 570h1v14h-1zM478 570h2v14h-2zM514 570h1v14h-1zM546 570h1v14h-1zM549 570h1v14h-1zM561 570h1v14h-1zM563 570h2v14h-2zM615 570h1v14h-1zM648 570h1v14h-1zM651 570h1v14h-1zM661 570h1v14h-1zM667 570h1v14h-1zM678 570h1v14h-1zM690 570h1v14h-1zM717 570h1v14h-1zM729 570h1v14h-1zM746 570h2v14h-2zM759 570h1v14h-1zM792 570h1v14h-1zM796 570h2v14h-2zM799 570h1v14h-1zM806 570h1v14h-1zM812 570h2v14h-2zM832 570h2v14h-2zM835 570h1v14h-1zM842 570h2v14h-2zM851 570h2v14h-2zM874 570h1v14h-1zM877 570h1v14h-1zM881 570h1v14h-1zM887 570h1v14h-1zM896 570h2v14h-2zM905 570h1v14h-1zM909 570h1v14h-1zM938 570h1v14h-1zM946 570h1v14h-1zM948 570h2v14h-2zM962 570h1v14h-1zM975 570h2v14h-2zM985 570h2v14h-2zM1003 570h1v14h-1zM1010 570h1v14h-1zM1032 570h1v14h-1zM1041 570h1v14h-1zM1065 570h1v14h-1zM1076 570h2v14h-2zM172 555h1v15h-1zM194 555h1v15h-1zM357 555h1v15h-1zM382 555h1v15h-1zM574 555h1v15h-1zM581 555h1v15h-1zM594 555h1v15h-1zM613 555h1v15h-1zM665 555h1v15h-1zM681 555h2v15h-2zM736 555h1v15h-1zM864 555h1v15h-1zM1020 555h1v15h-1zM109 562h1v22h-1zM111 562h1v22h-1zM117 562h1v22h-1zM147 562h1v22h-1zM212 562h1v22h-1zM261 562h2v22h-2zM348 562h2v22h-2zM454 562h2v22h-2zM467 562h1v22h-1zM472 562h1v22h-1zM484 562h1v22h-1zM487 562h1v22h-1zM510 562h2v22h-2zM528 562h1v22h-1zM566 562h2v22h-2zM596 562h2v22h-2zM618 562h2v22h-2zM639 562h1v22h-1zM641 562h1v22h-1zM653 562h1v22h-1zM655 562h1v22h-1zM668 562h1v22h-1zM671 562h1v22h-1zM675 562h1v22h-1zM686 562h1v22h-1zM701 562h1v22h-1zM722 562h2v22h-2zM725 562h2v22h-2zM784 562h1v22h-1zM845 562h1v22h-1zM848 562h1v22h-1zM879 562h1v22h-1zM911 562h1v22h-1zM923 562h1v22h-1zM925 562h2v22h-2zM952 562h1v22h-1zM1014 562h1v22h-1zM1029 562h1v22h-1zM1049 562h1v22h-1zM98 575h2v9h-2zM107 575h1v9h-1zM136 575h2v9h-2zM155 575h2v9h-2zM161 575h2v9h-2zM178 575h1v9h-1zM253 575h1v9h-1zM289 575h2v9h-2zM292 575h1v9h-1zM303 575h1v9h-1zM310 575h1v9h-1zM315 575h1v9h-1zM356 575h1v9h-1zM366 575h2v9h-2zM378 575h1v9h-1zM383 575h1v9h-1zM396 575h1v9h-1zM418 575h1v9h-1zM420 575h1v9h-1zM436 575h1v9h-1zM482 575h1v9h-1zM587 575h1v9h-1zM636 575h2v9h-2zM706 575h1v9h-1zM715 575h1v9h-1zM769 575h2v9h-2zM802 575h1v9h-1zM810 575h1v9h-1zM869 575h1v9h-1zM884 575h1v9h-1zM893 575h2v9h-2zM916 575h1v9h-1zM981 575h1v9h-1zM1009 575h1v9h-1zM1027 575h1v9h-1zM1054 575h1v9h-1zM1056 575h2v9h-2zM119 555h1v9h-1zM267 555h1v9h-1zM643 555h2v9h-2zM704 555h1v9h-1zM885 555h1v9h-1zM914 555h1v9h-1zM983 555h1v9h-1z" fill="url(#g8)" shape-rendering="crispEdges"/>
<linearGradient id="g9" gradientUnits="userSpaceOnUse" x1="0" y1="531" x2="0" y2="552">
<stop offset="0.00" stop-color="#0b16ba"/>
<stop offset="0.25" stop-color="#0e1bcd"/>
<stop offset="0.50" stop-color="#1020e0"/>
<stop offset="0.75" stop-color="#102ce4"/>
<stop offset="1.00" stop-color="#1038e8"/>
</linearGradient>
<path d="M105 531h1v21h-1zM109 531h2v21h-2zM126 531h1v21h-1zM145 531h1v21h-1zM149 531h2v21h-2zM158 531h1v21h-1zM173 531h1v21h-1zM175 531h1v21h-1zM206 531h1v21h-1zM219 531h1v21h-1zM222 531h1v21h-1zM226 531h2v21h-2zM235 531h2v21h-2zM244 531h1v21h-1zM268 531h1v21h-1zM273 531h1v21h-1zM281 531h1v21h-1zM287 531h1v21h-1zM289 531h1v21h-1zM295 531h1v21h-1zM304 531h1v21h-1zM306 531h1v21h-1zM310 531h2v21h-2zM320 531h1v21h-1zM326 531h2v21h-2zM332 531h1v21h-1zM335 531h1v21h-1zM343 531h1v21h-1zM345 531h1v21h-1zM372 531h2v21h-2zM377 531h1v21h-1zM396 531h2v21h-2zM402 531h1v21h-1zM405 531h1v21h-1zM414 531h2v21h-2zM418 531h1v21h-1zM427 531h1v21h-1zM435 531h1v21h-1zM440 531h1v21h-1zM458 531h1v21h-1zM460 531h1v21h-1zM468 531h2v21h-2zM473 531h1v21h-1zM475 531h1v21h-1zM483 531h3v21h-3zM492 531h1v21h-1zM501 531h3v21h-3zM505 531h1v21h-1zM517 531h1v21h-1zM523 531h1v21h-1zM527 531h1v21h-1zM529 531h1v21h-1zM539 531h1v21h-1zM541 531h1v21h-1zM545 531h1v21h-1zM552 531h1v21h-1zM562 531h2v21h-2zM567 531h2v21h-2zM573 531h1v21h-1zM575 531h1v21h-1zM590 531h1v21h-1zM595 531h3v21h-3zM605 531h1v21h-1zM607 531h1v21h-1zM610 531h2v21h-2zM617 531h1v21h-1zM627 531h1v21h-1zM629 531h2v21h-2zM637 531h2v21h-2zM646 531h2v21h-2zM651 531h1v21h-1zM658 531h1v21h-1zM677 531h1v21h-1zM685 531h1v21h-1zM697 531h1v21h-1zM712 531h2v21h-2zM723 531h2v21h-2zM730 531h2v21h-2zM733 531h1v21h-1zM735 531h1v21h-1zM738 531h1v21h-1zM741 531h1v21h-1zM746 531h1v21h-1zM751 531h1v21h-1zM753 531h1v21h-1zM757 531h1v21h-1zM764 531h1v21h-1zM777 531h1v21h-1zM779 531h1v21h-1zM784 531h1v21h-1zM795 531h1v21h-1zM799 531h3v21h-3zM806 531h2v21h-2zM812 531h1v21h-1zM815 531h1v21h-1zM817 531h1v21h-1zM820 531h1v21h-1zM824 531h1v21h-1zM826 531h1v21h-1zM832 531h2v21h-2zM839 531h1v21h-1zM844 531h1v21h-1zM847 531h3v21h-3zM855 531h2v21h-2zM883 531h3v21h-3zM897 531h2v21h-2zM901 531h1v21h-1zM905 531h3v21h-3zM912 531h1v21h-1zM914 531h1v21h-1zM929 531h1v21h-1zM941 531h2v21h-2zM944 531h2v21h-2zM957 531h1v21h-1zM960 531h1v21h-1zM962 531h3v21h-3zM985 531h1v21h-1zM987 531h1v21h-1zM1009 531h3v21h-3zM1025 531h1v21h-1zM1039 531h3v21h-3zM1053 531h1v21h-1zM1060 531h1v21h-1zM1062 531h1v21h-1zM1065 531h2v21h-2zM1068 531h1v21h-1zM1076 531h2v21h-2zM117 542h1v10h-1zM129 542h1v10h-1zM136 542h1v10h-1zM165 542h1v10h-1zM179 542h3v10h-3zM189 542h3v10h-3zM198 542h3v10h-3zM202 542h2v10h-2zM205 542h1v10h-1zM215 542h1v10h-1zM262 542h1v10h-1zM274 542h2v10h-2zM300 542h2v10h-2zM316 542h1v10h-1zM329 542h2v10h-2zM333 542h1v10h-1zM362 542h2v10h-2zM379 542h1v10h-1zM383 542h1v10h-1zM386 542h1v10h-1zM420 542h1v10h-1zM434 542h1v10h-1zM449 542h1v10h-1zM462 542h1v10h-1zM466 542h1v10h-1zM471 542h1v10h-1zM524 542h2v10h-2zM531 542h2v10h-2zM585 542h2v10h-2zM602 542h1v10h-1zM613 542h1v10h-1zM620 542h1v10h-1zM633 542h2v10h-2zM660 542h1v10h-1zM662 542h1v10h-1zM673 542h1v10h-1zM680 542h1v10h-1zM689 542h1v10h-1zM742 542h1v10h-1zM767 542h1v10h-1zM781 542h1v10h-1zM814 542h1v10h-1zM865 542h1v10h-1zM871 542h1v10h-1zM878 542h1v10h-1zM880 542h2v10h-2zM892 542h3v10h-3zM910 542h1v10h-1zM933 542h2v10h-2zM936 542h2v10h-2zM950 542h1v10h-1zM955 542h1v10h-1zM971 542h1v10h-1zM977 542h1v10h-1zM979 542h3v10h-3zM995 542h1v10h-1zM997 542h1v10h-1zM1017 542h1v10h-1zM1019 542h1v10h-1zM1026 542h2v10h-2zM1049 542h1v10h-1zM1070 542h1v10h-1zM1078 542h1v10h-1zM96 531h2v11h-2zM171 531h1v11h-1zM195 531h1v11h-1zM298 531h1v11h-1zM360 531h1v11h-1zM392 531h2v11h-2zM407 531h1v11h-1zM464 531h1v11h-1zM535 531h1v11h-1zM548 531h1v11h-1zM578 531h1v11h-1zM583 531h1v11h-1zM600 531h1v11h-1zM665 531h1v11h-1zM678 531h1v11h-1zM693 531h1v11h-1zM702 531h1v11h-1zM719 531h2v11h-2zM769 531h1v11h-1zM787 531h1v11h-1zM841 531h1v11h-1zM952 531h2v11h-2zM1033 531h1v11h-1zM1050 531h2v11h-2zM1056 531h1v11h-1zM1072 531h2v11h-2zM101 536h3v16h-3zM111 536h1v16h-1zM121 536h1v16h-1zM124 536h1v16h-1zM128 536h1v16h-1zM131 536h1v16h-1zM138 536h1v16h-1zM140 536h2v16h-2zM154 536h1v16h-1zM163 536h1v16h-1zM177 536h1v16h-1zM184 536h3v16h-3zM248 536h2v16h-2zM256 536h2v16h-2zM270 536h1v16h-1zM339 536h2v16h-2zM347 536h1v16h-1zM352 536h2v16h-2zM366 536h1v16h-1zM388 536h3v16h-3zM421 536h2v16h-2zM425 536h1v16h-1zM429 536h3v16h-3zM438 536h2v16h-2zM478 536h2v16h-2zM514 536h1v16h-1zM521 536h1v16h-1zM558 536h3v16h-3zM592 536h2v16h-2zM636 536h1v16h-1zM640 536h2v16h-2zM656 536h1v16h-1zM667 536h3v16h-3zM684 536h1v16h-1zM687 536h1v16h-1zM705 536h1v16h-1zM727 536h2v16h-2zM755 536h1v16h-1zM759 536h1v16h-1zM761 536h2v16h-2zM771 536h1v16h-1zM789 536h1v16h-1zM793 536h1v16h-1zM808 536h1v16h-1zM822 536h1v16h-1zM851 536h2v16h-2zM863 536h1v16h-1zM889 536h1v16h-1zM949 536h1v16h-1zM958 536h1v16h-1zM975 536h1v16h-1zM983 536h1v16h-1zM990 536h3v16h-3zM1005 536h1v16h-1zM1021 536h3v16h-3zM1044 536h1v16h-1zM99 546h1v6h-1zM266 546h1v6h-1zM291 546h2v6h-2zM314 546h1v6h-1zM318 546h1v6h-1zM323 546h1v6h-1zM354 546h1v6h-1zM368 546h1v6h-1zM409 546h1v6h-1zM497 546h1v6h-1zM499 546h1v6h-1zM508 546h3v6h-3zM512 546h1v6h-1zM518 546h2v6h-2zM643 546h2v6h-2zM653 546h2v6h-2zM709 546h2v6h-2zM715 546h2v6h-2zM744 546h1v6h-1zM749 546h1v6h-1zM804 546h1v6h-1zM827 546h1v6h-1zM874 546h1v6h-1zM919 546h1v6h-1zM973 546h1v6h-1zM996 546h1v6h-1zM1007 546h1v6h-1zM1014 546h1v6h-1zM1046 546h2v6h-2z" fill="url(#g9)" shape-rendering="crispEdges"/>
<linearGradient id="g10" gradientUnits="userSpaceOnUse" x1="0" y1="526" x2="0" y2="531">
<stop offset="0.00" stop-color="#0a13ad"/>
<stop offset="0.25" stop-color="#0a14b0"/>
<stop offset="0.50" stop-color="#0a15b3"/>
<stop offset="0.75" stop-color="#0b16b6"/>
<stop offset="1.00" stop-color="#0b16ba"/>
</linearGradient>
<path d="M104 526h1v5h-1zM142 526h2v5h-2zM176 526h1v5h-1zM202 526h2v5h-2zM216 526h2v5h-2zM285 526h3v5h-3zM297 526h1v5h-1zM320 526h1v5h-1zM332 526h1v5h-1zM366 526h2v5h-2zM377 526h1v5h-1zM384 526h2v5h-2zM435 526h2v5h-2zM438 526h2v5h-2zM449 526h3v5h-3zM504 526h1v5h-1zM556 526h2v5h-2zM567 526h1v5h-1zM596 526h1v5h-1zM635 526h2v5h-2zM690 526h1v5h-1zM701 526h1v5h-1zM706 526h3v5h-3zM732 526h3v5h-3zM760 526h2v5h-2zM803 526h1v5h-1zM813 526h1v5h-1zM850 526h2v5h-2zM890 526h2v5h-2zM935 526h3v5h-3zM953 526h3v5h-3zM966 526h2v5h-2zM979 526h2v5h-2zM1043 526h2v5h-2zM1048 526h3v5h-3zM1068 526h1v5h-1z" fill="url(#g10)" shape-rendering="crispEdges"/>
<linearGradient id="g11" gradientUnits="userSpaceOnUse" x1="0" y1="514" x2="0" y2="522">
<stop offset="0.00" stop-color="#0810a0"/>
<stop offset="0.25" stop-color="#0811a3"/>
<stop offset="0.50" stop-color="#0912a6"/>
<stop offset="0.75" stop-color="#0912aa"/>
<stop offset="1.00" stop-color="#0a13ad"/>
</linearGradient>
<path d="M96 514h1v8h-1zM157 514h1v8h-1zM192 514h1v8h-1zM219 514h1v8h-1zM228 514h1v8h-1zM259 514h1v8h-1zM317 514h1v8h-1zM329 514h1v8h-1zM513 514h1v8h-1zM518 514h1v8h-1zM557 514h1v8h-1zM564 514h1v8h-1zM589 514h1v8h-1zM611 514h1v8h-1zM613 514h1v8h-1zM620 514h1v8h-1zM642 514h1v8h-1zM668 514h1v8h-1zM676 514h1v8h-1zM695 514h1v8h-1zM724 514h1v8h-1zM747 514h1v8h-1zM757 514h1v8h-1zM766 514h1v8h-1zM827 514h1v8h-1zM829 514h1v8h-1zM843 514h1v8h-1zM883 514h1v8h-1zM904 514h1v8h-1zM923 514h1v8h-1zM934 514h1v8h-1zM985 514h1v8h-1zM1010 514h1v8h-1z" fill="url(#g11)" shape-rendering="crispEdges"/>
<radialGradient id="gw"><stop offset="0" stop-color="#f88808" stop-opacity=".85"/><stop offset=".5" stop-color="#f89810" stop-opacity=".45"/><stop offset="1" stop-color="#f8a010" stop-opacity="0"/></radialGradient>
<clipPath id="c4"><path d="M786 664H830V690H786zM832 664H855V690H832zM856 664H912V690H856z"/></clipPath>
<linearGradient id="gy" gradientUnits="userSpaceOnUse" x1="0" y1="664" x2="0" y2="690"><stop offset="0" stop-color="#d0e820" stop-opacity=".75"/><stop offset=".5" stop-color="#e8e018" stop-opacity=".45"/><stop offset="1" stop-color="#f0d010" stop-opacity=".1"/></linearGradient>
<g clip-path="url(#c4)"><rect x="786" y="664" width="126" height="26" fill="url(#gy)"/></g>
<g clip-path="url(#c4)"><ellipse cx="812" cy="692" rx="30" ry="17" fill="url(#gw)"/><ellipse cx="893" cy="692" rx="30" ry="18" fill="url(#gw)"/><ellipse cx="850" cy="693" rx="30" ry="9" fill="url(#gw)"/></g>
<path d="M781 664h4v26h-4zM830 664h2v26h-2zM838 664h2v12h-2zM855 677h1v13h-1zM916 664h8v26h-8z" fill="#000"/>
<path d="M136.5 691v-2M177.6 691v-2M218.6 691v-2M259.7 691v-2M300.7 691v-2M341.8 691v-2M382.8 691v-2M423.8 691v-2M464.9 691v-2M505.9 691v-2M547.0 691v-2M588.0 691v-2M629.0 691v-2M670.1 691v-2M711.1 691v-2M752.2 691v-2M793.2 691v-2M834.2 691v-2M875.3 691v-2M916.3 691v-2M957.4 691v-2M998.4 691v-2M1039.5 691v-2" stroke="#555" stroke-width="1" fill="none"/>
<rect x="1092" y="515" width="12" height="176.79999999999995" fill="url(#cb)"/>
<path d="M1104.5 515V692M1104 515.5H1112.5M1104 554.5H1112.5M1104 593.5H1112.5M1104 632.5H1112.5M1104 671.5H1112.5M1104 535.0H1108.5M1104 574.0H1108.5M1104 613.0H1108.5M1104 652.0H1108.5M1104 691.0H1108.5" stroke="#404040" stroke-width="1" fill="none" shape-rendering="crispEdges"/>
<text x="1117" y="522.8" text-anchor="start" font-size="12">10<tspan dy="-5.5">4</tspan></text>
<text x="1117" y="561.8" text-anchor="start" font-size="12">10<tspan dy="-5.5">2</tspan></text>
<text x="1117" y="600.8" text-anchor="start" font-size="12">10<tspan dy="-5.5">0</tspan></text>
<text x="1117" y="639.8" text-anchor="start" font-size="12">10<tspan dy="-5.5"><tspan textLength="6.3" lengthAdjust="spacingAndGlyphs">-</tspan>2</tspan></text>
<text x="1117" y="678.8" text-anchor="start" font-size="12">10<tspan dy="-5.5"><tspan textLength="6.3" lengthAdjust="spacingAndGlyphs">-</tspan>4</tspan></text>
<text x="1157.5" y="601.5" text-anchor="middle" font-size="12" transform="rotate(90 1157.5 601.5)" textLength="167" lengthAdjust="spacingAndGlyphs">intensity 1/(s cm^2 ster keV)</text>
<rect x="95" y="695" width="986" height="16" fill="#1c1c1c"/>
<rect x="97" y="696" width="6" height="14" fill="#ff0000"/>
<rect x="104" y="696" width="14" height="14" fill="#00ee00"/>
<rect x="119" y="696" width="46" height="14" fill="#ff0000"/>
<rect x="166" y="696" width="15" height="14" fill="#00ee00"/>
<rect x="182" y="696" width="13.300000000000011" height="14" fill="#ff0000"/>
<rect x="196.3" y="696" width="47.69999999999999" height="14" fill="#00ee00"/>
<rect x="245" y="696" width="835.3" height="14" fill="#ff0000"/>
<text x="79.3" y="708" text-anchor="end" font-size="12" textLength="49.3" lengthAdjust="spacingAndGlyphs">Sunlight?</text>
<path d="M136.5 711v4M177.6 711v4M218.6 711v8M259.7 711v4M300.7 711v4M341.8 711v8M382.8 711v4M423.8 711v4M464.9 711v8M505.9 711v4M547.0 711v4M588.0 711v8M629.0 711v4M670.1 711v4M711.1 711v8M752.2 711v4M793.2 711v4M834.2 711v8M875.3 711v4M916.3 711v4M957.4 711v8M998.4 711v4M1039.5 711v4M1080.5 711v8" stroke="#404040" stroke-width="1" fill="none" shape-rendering="crispEdges"/>
<text x="218.6" y="734" text-anchor="middle" font-size="12" textLength="34.3" lengthAdjust="spacingAndGlyphs">03:00</text>
<text x="218.6" y="749" text-anchor="middle" font-size="12" textLength="34.3" lengthAdjust="spacingAndGlyphs">13.40</text>
<text x="218.6" y="764" text-anchor="middle" font-size="12" textLength="34.3" lengthAdjust="spacingAndGlyphs">30.78</text>
<text x="218.6" y="779" text-anchor="middle" font-size="12" textLength="34.3" lengthAdjust="spacingAndGlyphs">36.23</text>
<text x="341.8" y="734" text-anchor="middle" font-size="12" textLength="34.3" lengthAdjust="spacingAndGlyphs">06:00</text>
<text x="341.8" y="749" text-anchor="middle" font-size="12" textLength="34.3" lengthAdjust="spacingAndGlyphs">13.45</text>
<text x="341.8" y="764" text-anchor="middle" font-size="12" textLength="34.3" lengthAdjust="spacingAndGlyphs">31.40</text>
<text x="341.8" y="779" text-anchor="middle" font-size="12" textLength="34.3" lengthAdjust="spacingAndGlyphs">37.07</text>
<text x="464.9" y="734" text-anchor="middle" font-size="12" textLength="34.3" lengthAdjust="spacingAndGlyphs">09:00</text>
<text x="464.9" y="749" text-anchor="middle" font-size="12" textLength="34.3" lengthAdjust="spacingAndGlyphs">13.51</text>
<text x="464.9" y="764" text-anchor="middle" font-size="12" textLength="34.3" lengthAdjust="spacingAndGlyphs">31.99</text>
<text x="464.9" y="779" text-anchor="middle" font-size="12" textLength="34.3" lengthAdjust="spacingAndGlyphs">37.90</text>
<text x="588.0" y="734" text-anchor="middle" font-size="12" textLength="34.3" lengthAdjust="spacingAndGlyphs">12:00</text>
<text x="588.0" y="749" text-anchor="middle" font-size="12" textLength="34.3" lengthAdjust="spacingAndGlyphs">13.55</text>
<text x="588.0" y="764" text-anchor="middle" font-size="12" textLength="34.3" lengthAdjust="spacingAndGlyphs">32.58</text>
<text x="588.0" y="779" text-anchor="middle" font-size="12" textLength="34.3" lengthAdjust="spacingAndGlyphs">38.70</text>
<text x="711.1" y="734" text-anchor="middle" font-size="12" textLength="34.3" lengthAdjust="spacingAndGlyphs">15:00</text>
<text x="711.1" y="749" text-anchor="middle" font-size="12" textLength="34.3" lengthAdjust="spacingAndGlyphs">13.60</text>
<text x="711.1" y="764" text-anchor="middle" font-size="12" textLength="34.3" lengthAdjust="spacingAndGlyphs">33.15</text>
<text x="711.1" y="779" text-anchor="middle" font-size="12" textLength="34.3" lengthAdjust="spacingAndGlyphs">39.49</text>
<text x="834.2" y="734" text-anchor="middle" font-size="12" textLength="34.3" lengthAdjust="spacingAndGlyphs">18:00</text>
<text x="834.2" y="749" text-anchor="middle" font-size="12" textLength="34.3" lengthAdjust="spacingAndGlyphs">13.65</text>
<text x="834.2" y="764" text-anchor="middle" font-size="12" textLength="34.3" lengthAdjust="spacingAndGlyphs">33.70</text>
<text x="834.2" y="779" text-anchor="middle" font-size="12" textLength="34.3" lengthAdjust="spacingAndGlyphs">40.26</text>
<text x="957.4" y="734" text-anchor="middle" font-size="12" textLength="34.3" lengthAdjust="spacingAndGlyphs">21:00</text>
<text x="957.4" y="749" text-anchor="middle" font-size="12" textLength="34.3" lengthAdjust="spacingAndGlyphs">13.69</text>
<text x="957.4" y="764" text-anchor="middle" font-size="12" textLength="34.3" lengthAdjust="spacingAndGlyphs">34.24</text>
<text x="957.4" y="779" text-anchor="middle" font-size="12" textLength="34.3" lengthAdjust="spacingAndGlyphs">41.02</text>
<text x="1080.5" y="734" text-anchor="middle" font-size="12" textLength="34.3" lengthAdjust="spacingAndGlyphs">00:00</text>
<text x="1080.5" y="749" text-anchor="middle" font-size="12" textLength="34.3" lengthAdjust="spacingAndGlyphs">13.73</text>
<text x="1080.5" y="764" text-anchor="middle" font-size="12" textLength="34.3" lengthAdjust="spacingAndGlyphs">34.77</text>
<text x="1080.5" y="779" text-anchor="middle" font-size="12" textLength="34.3" lengthAdjust="spacingAndGlyphs">41.76</text>
<text x="60" y="749" text-anchor="end" font-size="12" textLength="44" lengthAdjust="spacingAndGlyphs">LT (hrs)</text>
<text x="60" y="764" text-anchor="end" font-size="12" textLength="13.5" lengthAdjust="spacingAndGlyphs">Rs</text>
<text x="60" y="779" text-anchor="end" font-size="12" textLength="46.7" lengthAdjust="spacingAndGlyphs">Dipole L</text>
<rect x="215.5" y="802.5" width="151.0" height="148.0" fill="#fff" stroke="#404040" stroke-width="1" shape-rendering="crispEdges"/>
<path d="M207.0 803.5H215.5M211.0 805.5H215.5M211.0 807.5H215.5M211.0 808.5H215.5M211.0 810.5H215.5M211.0 812.5H215.5M211.0 814.5H215.5M211.0 816.5H215.5M211.0 818.5H215.5M211.0 819.5H215.5M207.0 821.5H215.5M211.0 823.5H215.5M211.0 825.5H215.5M211.0 827.5H215.5M211.0 829.5H215.5M211.0 830.5H215.5M211.0 832.5H215.5M211.0 834.5H215.5M211.0 836.5H215.5M211.0 838.5H215.5M207.0 840.5H215.5M211.0 841.5H215.5M211.0 843.5H215.5M211.0 845.5H215.5M211.0 847.5H215.5M211.0 849.5H215.5M211.0 851.5H215.5M211.0 853.5H215.5M211.0 854.5H215.5M211.0 856.5H215.5M207.0 858.5H215.5M211.0 860.5H215.5M211.0 862.5H215.5M211.0 864.5H215.5M211.0 865.5H215.5M211.0 867.5H215.5M211.0 869.5H215.5M211.0 871.5H215.5M211.0 873.5H215.5M211.0 875.5H215.5M207.0 876.5H215.5M211.0 878.5H215.5M211.0 880.5H215.5M211.0 882.5H215.5M211.0 884.5H215.5M211.0 886.5H215.5M211.0 887.5H215.5M211.0 889.5H215.5M211.0 891.5H215.5M211.0 893.5H215.5M207.0 895.5H215.5M211.0 897.5H215.5M211.0 898.5H215.5M211.0 900.5H215.5M211.0 902.5H215.5M211.0 904.5H215.5M211.0 906.5H215.5M211.0 908.5H215.5M211.0 909.5H215.5M211.0 911.5H215.5M207.0 913.5H215.5M211.0 915.5H215.5M211.0 917.5H215.5M211.0 919.5H215.5M211.0 921.5H215.5M211.0 922.5H215.5M211.0 924.5H215.5M211.0 926.5H215.5M211.0 928.5H215.5M211.0 930.5H215.5M207.0 932.5H215.5M211.0 933.5H215.5M211.0 935.5H215.5M211.0 937.5H215.5M211.0 939.5H215.5M211.0 941.5H215.5M211.0 943.5H215.5M211.0 944.5H215.5M211.0 946.5H215.5M211.0 948.5H215.5M207.0 950.5H215.5M216.5 950.5v8.5M235.5 950.5v4.5M254.5 950.5v8.5M272.5 950.5v4.5M291.5 950.5v8.5M310.5 950.5v4.5M329.5 950.5v8.5M347.5 950.5v4.5M366.5 950.5v8.5" stroke="#404040" stroke-width="1" fill="none" shape-rendering="crispEdges"/>
<text x="201.2" y="807.8" text-anchor="end" font-size="12"><tspan textLength="6.3" lengthAdjust="spacingAndGlyphs">-</tspan>40.</text>
<text x="201.2" y="826.2" text-anchor="end" font-size="12"><tspan textLength="6.3" lengthAdjust="spacingAndGlyphs">-</tspan>30.</text>
<text x="201.2" y="844.5" text-anchor="end" font-size="12"><tspan textLength="6.3" lengthAdjust="spacingAndGlyphs">-</tspan>20.</text>
<text x="201.2" y="862.9" text-anchor="end" font-size="12"><tspan textLength="6.3" lengthAdjust="spacingAndGlyphs">-</tspan>10.</text>
<text x="201.2" y="881.3" text-anchor="end" font-size="12">0.</text>
<text x="201.2" y="899.7" text-anchor="end" font-size="12">10.</text>
<text x="201.2" y="918.0" text-anchor="end" font-size="12">20.</text>
<text x="201.2" y="936.4" text-anchor="end" font-size="12">30.</text>
<text x="201.2" y="954.8" text-anchor="end" font-size="12">40.</text>
<text x="216.2" y="973.5" text-anchor="middle" font-size="12">40.</text>
<text x="253.7" y="973.5" text-anchor="middle" font-size="12">20.</text>
<text x="291.2" y="973.5" text-anchor="middle" font-size="12">0.</text>
<text x="328.7" y="973.5" text-anchor="middle" font-size="12"><tspan textLength="6.3" lengthAdjust="spacingAndGlyphs">-</tspan>20.</text>
<text x="366.2" y="973.5" text-anchor="middle" font-size="12"><tspan textLength="6.3" lengthAdjust="spacingAndGlyphs">-</tspan>40.</text>
<text x="290.0" y="991.7" text-anchor="middle" font-size="12">KSM<tspan textLength="6.3" lengthAdjust="spacingAndGlyphs">-</tspan>X</text>
<text x="166" y="877" text-anchor="middle" font-size="12" transform="rotate(-90 166 877)">KSM<tspan textLength="6.3" lengthAdjust="spacingAndGlyphs">-</tspan>Y</text>
<rect x="509.5" y="802.5" width="151.0" height="148.0" fill="#fff" stroke="#404040" stroke-width="1" shape-rendering="crispEdges"/>
<path d="M501.0 803.5H509.5M505.0 805.5H509.5M505.0 807.5H509.5M505.0 808.5H509.5M505.0 810.5H509.5M505.0 812.5H509.5M505.0 814.5H509.5M505.0 816.5H509.5M505.0 818.5H509.5M505.0 819.5H509.5M501.0 821.5H509.5M505.0 823.5H509.5M505.0 825.5H509.5M505.0 827.5H509.5M505.0 829.5H509.5M505.0 830.5H509.5M505.0 832.5H509.5M505.0 834.5H509.5M505.0 836.5H509.5M505.0 838.5H509.5M501.0 840.5H509.5M505.0 841.5H509.5M505.0 843.5H509.5M505.0 845.5H509.5M505.0 847.5H509.5M505.0 849.5H509.5M505.0 851.5H509.5M505.0 853.5H509.5M505.0 854.5H509.5M505.0 856.5H509.5M501.0 858.5H509.5M505.0 860.5H509.5M505.0 862.5H509.5M505.0 864.5H509.5M505.0 865.5H509.5M505.0 867.5H509.5M505.0 869.5H509.5M505.0 871.5H509.5M505.0 873.5H509.5M505.0 875.5H509.5M501.0 876.5H509.5M505.0 878.5H509.5M505.0 880.5H509.5M505.0 882.5H509.5M505.0 884.5H509.5M505.0 886.5H509.5M505.0 887.5H509.5M505.0 889.5H509.5M505.0 891.5H509.5M505.0 893.5H509.5M501.0 895.5H509.5M505.0 897.5H509.5M505.0 898.5H509.5M505.0 900.5H509.5M505.0 902.5H509.5M505.0 904.5H509.5M505.0 906.5H509.5M505.0 908.5H509.5M505.0 909.5H509.5M505.0 911.5H509.5M501.0 913.5H509.5M505.0 915.5H509.5M505.0 917.5H509.5M505.0 919.5H509.5M505.0 921.5H509.5M505.0 922.5H509.5M505.0 924.5H509.5M505.0 926.5H509.5M505.0 928.5H509.5M505.0 930.5H509.5M501.0 932.5H509.5M505.0 933.5H509.5M505.0 935.5H509.5M505.0 937.5H509.5M505.0 939.5H509.5M505.0 941.5H509.5M505.0 943.5H509.5M505.0 944.5H509.5M505.0 946.5H509.5M505.0 948.5H509.5M501.0 950.5H509.5M510.5 950.5v8.5M529.5 950.5v4.5M548.5 950.5v8.5M566.5 950.5v4.5M585.5 950.5v8.5M604.5 950.5v4.5M623.5 950.5v8.5M641.5 950.5v4.5M660.5 950.5v8.5" stroke="#404040" stroke-width="1" fill="none" shape-rendering="crispEdges"/>
<text x="495.2" y="807.8" text-anchor="end" font-size="12">40.</text>
<text x="495.2" y="826.2" text-anchor="end" font-size="12">30.</text>
<text x="495.2" y="844.5" text-anchor="end" font-size="12">20.</text>
<text x="495.2" y="862.9" text-anchor="end" font-size="12">10.</text>
<text x="495.2" y="881.3" text-anchor="end" font-size="12">0.</text>
<text x="495.2" y="899.7" text-anchor="end" font-size="12"><tspan textLength="6.3" lengthAdjust="spacingAndGlyphs">-</tspan>10.</text>
<text x="495.2" y="918.0" text-anchor="end" font-size="12"><tspan textLength="6.3" lengthAdjust="spacingAndGlyphs">-</tspan>20.</text>
<text x="495.2" y="936.4" text-anchor="end" font-size="12"><tspan textLength="6.3" lengthAdjust="spacingAndGlyphs">-</tspan>30.</text>
<text x="495.2" y="954.8" text-anchor="end" font-size="12"><tspan textLength="6.3" lengthAdjust="spacingAndGlyphs">-</tspan>40.</text>
<text x="510.2" y="973.5" text-anchor="middle" font-size="12">40.</text>
<text x="547.7" y="973.5" text-anchor="middle" font-size="12">20.</text>
<text x="585.2" y="973.5" text-anchor="middle" font-size="12">0.</text>
<text x="622.7" y="973.5" text-anchor="middle" font-size="12"><tspan textLength="6.3" lengthAdjust="spacingAndGlyphs">-</tspan>20.</text>
<text x="660.2" y="973.5" text-anchor="middle" font-size="12"><tspan textLength="6.3" lengthAdjust="spacingAndGlyphs">-</tspan>40.</text>
<text x="584.0" y="991.7" text-anchor="middle" font-size="12">KSM<tspan textLength="6.3" lengthAdjust="spacingAndGlyphs">-</tspan>X</text>
<text x="461" y="877" text-anchor="middle" font-size="12" transform="rotate(-90 461 877)">KSM<tspan textLength="6.3" lengthAdjust="spacingAndGlyphs">-</tspan>Z</text>
<rect x="803.5" y="802.5" width="151.0" height="148.0" fill="#fff" stroke="#404040" stroke-width="1" shape-rendering="crispEdges"/>
<path d="M795.0 803.5H803.5M799.0 805.5H803.5M799.0 807.5H803.5M799.0 808.5H803.5M799.0 810.5H803.5M799.0 812.5H803.5M799.0 814.5H803.5M799.0 816.5H803.5M799.0 818.5H803.5M799.0 819.5H803.5M795.0 821.5H803.5M799.0 823.5H803.5M799.0 825.5H803.5M799.0 827.5H803.5M799.0 829.5H803.5M799.0 830.5H803.5M799.0 832.5H803.5M799.0 834.5H803.5M799.0 836.5H803.5M799.0 838.5H803.5M795.0 840.5H803.5M799.0 841.5H803.5M799.0 843.5H803.5M799.0 845.5H803.5M799.0 847.5H803.5M799.0 849.5H803.5M799.0 851.5H803.5M799.0 853.5H803.5M799.0 854.5H803.5M799.0 856.5H803.5M795.0 858.5H803.5M799.0 860.5H803.5M799.0 862.5H803.5M799.0 864.5H803.5M799.0 865.5H803.5M799.0 867.5H803.5M799.0 869.5H803.5M799.0 871.5H803.5M799.0 873.5H803.5M799.0 875.5H803.5M795.0 876.5H803.5M799.0 878.5H803.5M799.0 880.5H803.5M799.0 882.5H803.5M799.0 884.5H803.5M799.0 886.5H803.5M799.0 887.5H803.5M799.0 889.5H803.5M799.0 891.5H803.5M799.0 893.5H803.5M795.0 895.5H803.5M799.0 897.5H803.5M799.0 898.5H803.5M799.0 900.5H803.5M799.0 902.5H803.5M799.0 904.5H803.5M799.0 906.5H803.5M799.0 908.5H803.5M799.0 909.5H803.5M799.0 911.5H803.5M795.0 913.5H803.5M799.0 915.5H803.5M799.0 917.5H803.5M799.0 919.5H803.5M799.0 921.5H803.5M799.0 922.5H803.5M799.0 924.5H803.5M799.0 926.5H803.5M799.0 928.5H803.5M799.0 930.5H803.5M795.0 932.5H803.5M799.0 933.5H803.5M799.0 935.5H803.5M799.0 937.5H803.5M799.0 939.5H803.5M799.0 941.5H803.5M799.0 943.5H803.5M799.0 944.5H803.5M799.0 946.5H803.5M799.0 948.5H803.5M795.0 950.5H803.5M804.5 950.5v8.5M823.5 950.5v4.5M842.5 950.5v8.5M860.5 950.5v4.5M879.5 950.5v8.5M898.5 950.5v4.5M917.5 950.5v8.5M935.5 950.5v4.5M954.5 950.5v8.5" stroke="#404040" stroke-width="1" fill="none" shape-rendering="crispEdges"/>
<text x="789.2" y="807.8" text-anchor="end" font-size="12">40.</text>
<text x="789.2" y="826.2" text-anchor="end" font-size="12">30.</text>
<text x="789.2" y="844.5" text-anchor="end" font-size="12">20.</text>
<text x="789.2" y="862.9" text-anchor="end" font-size="12">10.</text>
<text x="789.2" y="881.3" text-anchor="end" font-size="12">0.</text>
<text x="789.2" y="899.7" text-anchor="end" font-size="12"><tspan textLength="6.3" lengthAdjust="spacingAndGlyphs">-</tspan>10.</text>
<text x="789.2" y="918.0" text-anchor="end" font-size="12"><tspan textLength="6.3" lengthAdjust="spacingAndGlyphs">-</tspan>20.</text>
<text x="789.2" y="936.4" text-anchor="end" font-size="12"><tspan textLength="6.3" lengthAdjust="spacingAndGlyphs">-</tspan>30.</text>
<text x="789.2" y="954.8" text-anchor="end" font-size="12"><tspan textLength="6.3" lengthAdjust="spacingAndGlyphs">-</tspan>40.</text>
<text x="804.2" y="973.5" text-anchor="middle" font-size="12"><tspan textLength="6.3" lengthAdjust="spacingAndGlyphs">-</tspan>40.</text>
<text x="841.7" y="973.5" text-anchor="middle" font-size="12"><tspan textLength="6.3" lengthAdjust="spacingAndGlyphs">-</tspan>20.</text>
<text x="879.2" y="973.5" text-anchor="middle" font-size="12">0.</text>
<text x="916.7" y="973.5" text-anchor="middle" font-size="12">20.</text>
<text x="954.2" y="973.5" text-anchor="middle" font-size="12">40.</text>
<text x="878.0" y="991.7" text-anchor="middle" font-size="12">KSM<tspan textLength="6.3" lengthAdjust="spacingAndGlyphs">-</tspan>Y</text>
<text x="754.4" y="877" text-anchor="middle" font-size="12" transform="rotate(-90 754.4 877)">KSM<tspan textLength="6.3" lengthAdjust="spacingAndGlyphs">-</tspan>Z</text>
<path d="M248.8 802.7L245.0 808.7L239.1 818.9L234.0 829.9L230.3 841.0L227.2 852.0L225.5 863.1L225.5 876.7L225.8 888.6L227.2 900.5L230.3 912.4L234.0 921.7L238.2 931.1L243.3 940.4L249.3 949.4" stroke="#1010ff" stroke-width="1.2" fill="none" stroke-dasharray="2.2 2.2" stroke-linejoin="round"/>
<path d="M283.8 802.7L274.8 808.7L264.6 818.9L256.9 828.2L251.0 838.4L245.9 849.5L243.3 859.7L242.2 869.9L242.5 880.1L243.9 892.0L246.7 902.2L251.0 912.4L257.8 924.3L266.3 934.5L274.8 943.0L282.8 948.9" stroke="#8b4513" stroke-width="1.2" fill="none" stroke-dasharray="2.2 2.2" stroke-linejoin="round"/>
<circle cx="292.4" cy="877.6" r="37.3" fill="none" stroke="#000" stroke-width="1.4"/>
<ellipse cx="291.8" cy="877" rx="2.1" ry="1.6" fill="none" stroke="#000" stroke-width="1"/>
<path d="M233.1 938.7L233.1 932.8L233.5 926.0L234.5 920.0L236.5 913.2L239.9 905.6L244.5 897.9L250.1 890.3L255.2 884.3L261.2 878.4L268.0 873.3L274.8 869.6L280.7 867.7L286.7 867.3L292.6 868.5L297.7 871.9L301.1 876.7L303.2 881.8L303.7 887.4" stroke="#000" stroke-width="1.4" fill="none" stroke-linejoin="round"/>
<rect x="231.6" y="932" width="1.5" height="1.6" fill="#000"/>
<path d="M237.3 911L243 900.5" stroke="#1010ff" stroke-width="4.2" stroke-linecap="butt"/>
<circle cx="317.3" cy="850.2" r="2.4" fill="#ff0000"/>
<path d="M236.8 896.8L245.8 905.8M236.8 905.8L245.8 896.8" stroke="#ff1010" stroke-width="1.2"/>
<path d="M542.9 803.6L537.0 813.1L531.3 824.6L526.1 837.2L522.5 849.8L520.4 862.4L519.4 876.1L519.8 888.7L521.5 901.3L524.6 913.9L528.6 925.4L533.4 935.9L538.7 944.3L542.5 949.6" stroke="#1010ff" stroke-width="1.2" fill="none" stroke-dasharray="2.2 2.2" stroke-linejoin="round"/>
<path d="M576.9 804.3L568.1 811.0L558.6 819.4L550.2 828.8L543.9 839.3L539.1 850.9L536.6 862.4L535.5 874.0L536.2 885.5L538.7 898.1L542.9 909.7L549.2 921.2L556.5 931.7L566.0 941.2L576.9 949.6" stroke="#8b4513" stroke-width="1.2" fill="none" stroke-dasharray="2.2 2.2" stroke-linejoin="round"/>
<path d="M527.1 892.3L624.1 868.5" stroke="#000" stroke-width="1.8" fill="none" stroke-linejoin="round"/>
<circle cx="585.3" cy="876.7" r="1.9" fill="#000"/>
<path d="M530.5 890.6L538 888.8" stroke="#1010ff" stroke-width="4.2"/>
<circle cx="611.5" cy="871.3" r="2.4" fill="#ff0000"/>
<path d="M531.0 884.2L540.0 893.2M531.0 893.2L540.0 884.2" stroke="#ff1010" stroke-width="1.2"/>
<circle cx="879.1" cy="876.5" r="58.5" fill="none" stroke="#1010ff" stroke-width="1.2" stroke-dasharray="2.2 2.2"/>
<ellipse cx="880.3" cy="876.6" rx="38.2" ry="8.1" fill="none" stroke="#000" stroke-width="1.5" transform="rotate(-0.5 880.3 876.6)"/>
<path d="M868.0 884.2L878.0 884.9L890.0 886.5L900.0 888.5L917.0 890.8L930.0 892.0L941.8 892.5" stroke="#000" stroke-width="1.4" fill="none" stroke-linejoin="round"/>
<path d="M890.8 874.3L875.0 874.3L871.0 875.8L869.3 877.8L871.0 880.5L875.0 883.0L884.0 885.2" stroke="#000" stroke-width="1.2" fill="none" stroke-linejoin="round"/>
<ellipse cx="879" cy="877" rx="1.9" ry="1.5" fill="none" stroke="#8b4513" stroke-width="1"/>
<path d="M904.5 888.2L916 892.3" stroke="#1010ff" stroke-width="4.6"/>
<circle cx="852.2" cy="871.5" r="2.4" fill="#ff0000"/>
<path d="M900.0 884.0L909.0 893.0M900.0 893.0L909.0 884.0" stroke="#ff1010" stroke-width="1.2"/>
</svg></body></html>
